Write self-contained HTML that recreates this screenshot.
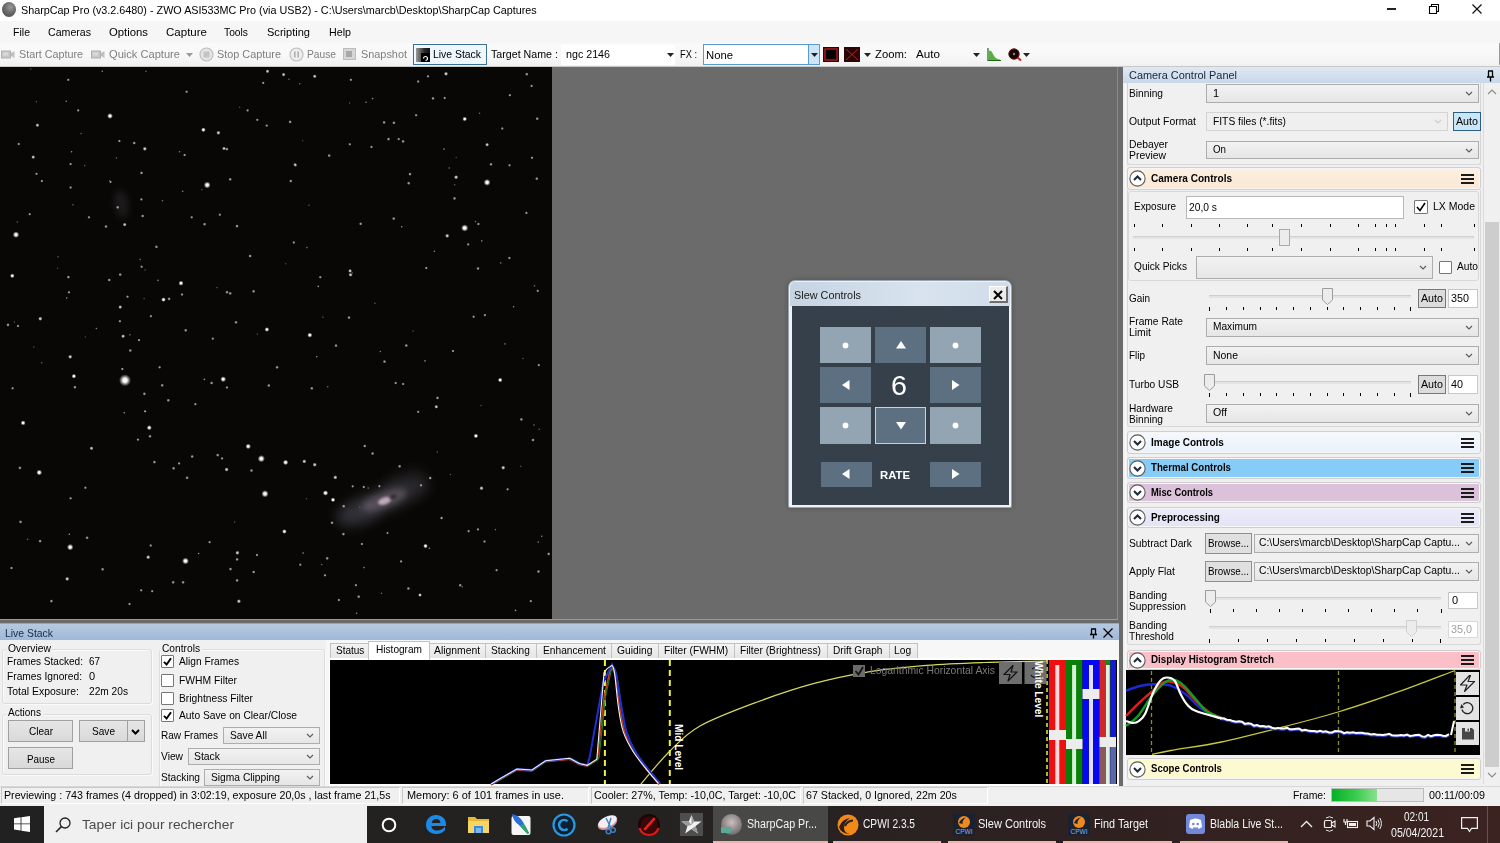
<!DOCTYPE html><html><head><meta charset="utf-8"><style>
*{margin:0;padding:0;box-sizing:border-box}
html,body{width:1500px;height:843px;overflow:hidden;background:#fff;font-family:"Liberation Sans",sans-serif}
.t{position:absolute;white-space:nowrap;line-height:1;transform-origin:0 0}
.r{position:absolute}
svg{position:absolute;overflow:visible}
</style></head><body>
<div class="r" style="left:0px;top:0px;width:1500px;height:21px;background:#ffffff;"></div>
<div class="r" style="left:2px;top:2px;width:14px;height:15px;border-radius:50%;background:radial-gradient(circle at 60% 35%,#9a9a9a 0,#6a6a6a 45%,#3b4a44 100%)"></div>
<div class="t" style="left:21px;top:5px;font-size:11px;color:#000;transform:scaleX(0.981) translateZ(0);">SharpCap Pro (v3.2.6480) - ZWO ASI533MC Pro (via USB2) - C:\Users\marcb\Desktop\SharpCap Captures</div>
<div class="r" style="left:1387px;top:8px;width:9px;height:2px;background:#222;"></div>
<svg style="left:1428px;top:3px" width="12" height="11"><path d="M1.5 3.5H8.5V10.5H1.5ZM3.5 3.5V1.5H10.5V8.5H8.5" stroke="#000" stroke-width="1.1" fill="none"/></svg>
<svg style="left:1472px;top:4px" width="10" height="10"><path d="M0.5 0.5L9.5 9.5M9.5 0.5L0.5 9.5" stroke="#111" stroke-width="1.2"/></svg>
<div class="r" style="left:0px;top:21px;width:1500px;height:22px;background:#f6f6f6;"></div>
<div class="t" style="left:13px;top:27px;font-size:11px;color:#000;transform:scaleX(0.959) translateZ(0);">File</div>
<div class="t" style="left:48px;top:27px;font-size:11px;color:#000;transform:scaleX(0.964) translateZ(0);">Cameras</div>
<div class="t" style="left:109px;top:27px;font-size:11px;color:#000;transform:scaleX(1.028) translateZ(0);">Options</div>
<div class="t" style="left:166px;top:27px;font-size:11px;color:#000;transform:scaleX(1.047) translateZ(0);">Capture</div>
<div class="t" style="left:224px;top:27px;font-size:11px;color:#000;transform:scaleX(0.934) translateZ(0);">Tools</div>
<div class="t" style="left:267px;top:27px;font-size:11px;color:#000;transform:scaleX(1.004) translateZ(0);">Scripting</div>
<div class="t" style="left:329px;top:27px;font-size:11px;color:#000;transform:scaleX(0.972) translateZ(0);">Help</div>
<div class="r" style="left:0px;top:43px;width:1500px;height:24px;background:linear-gradient(#fafafa,#f8f8f8 50%,#f0f0f0);"></div>
<div class="t" style="left:19px;top:49px;font-size:11px;color:#7e7e7e;transform:scaleX(0.978) translateZ(0);">Start Capture</div>
<div class="t" style="left:109px;top:49px;font-size:11px;color:#7e7e7e;transform:scaleX(1.009) translateZ(0);">Quick Capture</div>
<div class="t" style="left:217px;top:49px;font-size:11px;color:#7e7e7e;transform:scaleX(0.987) translateZ(0);">Stop Capture</div>
<div class="t" style="left:307px;top:49px;font-size:11px;color:#7e7e7e;transform:scaleX(0.929) translateZ(0);">Pause</div>
<div class="t" style="left:361px;top:49px;font-size:11px;color:#7e7e7e;transform:scaleX(0.989) translateZ(0);">Snapshot</div>
<svg style="left:1px;top:50px" width="14" height="9"><rect x="0.5" y="1" width="9" height="7" fill="#c8c8c8" stroke="#b0b0b0"/><path d="M10 3L13.5 1V8L10 6Z" fill="#c0c0c0"/><rect x="2" y="2.5" width="5" height="3" fill="#dadada"/></svg>
<svg style="left:91px;top:50px" width="14" height="9"><rect x="0.5" y="1" width="9" height="7" fill="#c8c8c8" stroke="#b0b0b0"/><path d="M10 3L13.5 1V8L10 6Z" fill="#c0c0c0"/><rect x="2" y="2.5" width="5" height="3" fill="#dadada"/></svg>
<svg style="left:186px;top:53px" width="7" height="4"><path d="M0 0H7L3.5 4Z" fill="#9a9a9a"/></svg>
<svg style="left:199px;top:47px" width="15" height="15"><circle cx="7.5" cy="7.5" r="6.5" fill="#e6e6e6" stroke="#bdbdbd" stroke-width="1.2"/><rect x="4.5" y="4.5" width="6" height="6" fill="#c4c4c4"/></svg>
<svg style="left:289px;top:47px" width="15" height="15"><circle cx="7.5" cy="7.5" r="6.5" fill="#eeeeee" stroke="#bdbdbd" stroke-width="1.2"/><rect x="5" y="4.5" width="1.6" height="6" fill="#b0b0b0"/><rect x="8.4" y="4.5" width="1.6" height="6" fill="#b0b0b0"/></svg>
<svg style="left:343px;top:48px" width="14" height="13"><rect x="0.5" y="0.5" width="12" height="11" fill="#d6d6d6" stroke="#bcbcbc"/><rect x="3" y="3" width="6" height="6" fill="#a8a8a8"/></svg>
<div class="r" style="left:413px;top:44px;width:74px;height:21px;border:1px solid #3f6f90;background:#eef7fb"></div>
<div class="r" style="left:416px;top:48px;width:14px;height:14px;background:linear-gradient(90deg,#9a9a9a,#2a2a2a 60%,#111)"></div>
<div class="r" style="left:421px;top:53px;width:9px;height:9px;background:#000"></div>
<svg style="left:422px;top:55px" width="7" height="7"><path d="M1.5 3.5A2 2 0 1 1 3.5 5.5" stroke="#fff" stroke-width="1.2" fill="none"/></svg>
<div class="t" style="left:433px;top:49px;font-size:11px;color:#000;transform:scaleX(0.945) translateZ(0);">Live Stack</div>
<div class="t" style="left:491px;top:49px;font-size:11px;color:#000;transform:scaleX(0.969) translateZ(0);">Target Name :</div>
<div class="r" style="left:561px;top:45px;width:114px;height:20px;background:#ffffff;"></div>
<div class="t" style="left:566px;top:49px;font-size:11px;color:#000;transform:scaleX(0.971) translateZ(0);">ngc 2146</div>
<svg style="left:667px;top:53px" width="7" height="4"><path d="M0 0H7L3.5 4Z" fill="#222"/></svg>
<div class="t" style="left:680px;top:49px;font-size:11px;color:#000;transform:scaleX(0.842) translateZ(0);">FX :</div>
<div class="r" style="left:703px;top:44px;width:117px;height:21px;border:1px solid #5a9ad0;background:#fff"></div>
<div class="r" style="left:809px;top:45px;width:10px;height:19px;background:#cde6f7;"></div>
<div class="r" style="left:808px;top:45px;width:1px;height:19px;background:#5a9ad0;"></div>
<svg style="left:811px;top:53px" width="7" height="4"><path d="M0 0H7L3.5 4Z" fill="#222"/></svg>
<div class="t" style="left:706px;top:50px;font-size:11px;color:#000;transform:scaleX(1.026) translateZ(0);">None</div>
<svg style="left:823px;top:47px" width="16" height="15"><rect x="0" y="0" width="16" height="15" fill="#2a0606"/><rect x="2" y="2" width="12" height="11" fill="#100" stroke="#c62020" stroke-width="1.2"/><circle cx="8" cy="7.5" r="4" fill="#000"/></svg>
<svg style="left:844px;top:47px" width="16" height="15"><rect x="0" y="0" width="16" height="15" fill="#2a0606"/><path d="M2 2L14 13M14 2L2 13" stroke="#b82020" stroke-width="1"/></svg>
<svg style="left:864px;top:53px" width="7" height="4"><path d="M0 0H7L3.5 4Z" fill="#222"/></svg>
<div class="t" style="left:875px;top:49px;font-size:11px;color:#000;transform:scaleX(1.026) translateZ(0);">Zoom:</div>
<div class="t" style="left:916px;top:49px;font-size:11px;color:#000;transform:scaleX(1.059) translateZ(0);">Auto</div>
<svg style="left:973px;top:53px" width="7" height="4"><path d="M0 0H7L3.5 4Z" fill="#222"/></svg>
<svg style="left:987px;top:48px" width="14" height="13"><path d="M2 12V3Q4 1 6 6T13 11.5V12Z" fill="#5ab040"/><path d="M1 0V12.5H14" stroke="#1a6a10" stroke-width="1.2" fill="none"/></svg>
<svg style="left:1008px;top:48px" width="14" height="13"><circle cx="6" cy="6" r="5.2" fill="#1a0505" stroke="#6a1010" stroke-width="1"/><path d="M9.5 9.5L13 12.5" stroke="#c02020" stroke-width="2"/><circle cx="6" cy="6" r="1.2" fill="#888"/></svg>
<svg style="left:1023px;top:53px" width="7" height="4"><path d="M0 0H7L3.5 4Z" fill="#222"/></svg>
<div class="r" style="left:1499px;top:43px;width:1px;height:22px;background:#9a9a9a;"></div>
<div class="r" style="left:0px;top:66px;width:1500px;height:1px;background:#c8c8c8;"></div>
<div class="r" style="left:0px;top:67px;width:552px;height:552px;background:#090705;"></div>
<div class="r" style="left:552px;top:67px;width:567px;height:552px;background:#6b6b6b;"></div>
<div class="r" style="left:1117px;top:67px;width:1px;height:552px;background:#8a8a8a;"></div>
<div class="r" style="left:0px;top:619px;width:1119px;height:5px;background:#6b6b6b;"></div>
<div class="r" style="left:0px;top:619px;width:1119px;height:1px;background:#9a9a9a;"></div>
<div class="r" style="left:1118px;top:67px;width:5px;height:719px;background:#6b6b6b;"></div>
<div class="r" style="left:1123px;top:67px;width:377px;height:719px;background:#f0f0f0;"></div>
<div class="r" style="left:1123px;top:67px;width:377px;height:16px;background:linear-gradient(#dfe9f5,#c8d8e9)"></div>
<div class="t" style="left:1129px;top:70px;font-size:11px;color:#1a2533;transform:scaleX(0.992) translateZ(0);">Camera Control Panel</div>
<svg style="left:1486px;top:70px" width="9" height="12"><path d="M2 1H7M2.5 1V7H6.5V1M1 7H8M4.5 7V11.5" stroke="#000" stroke-width="1.3" fill="none"/></svg>
<div class="r" style="left:1125px;top:83px;width:1px;height:703px;background:#fbfbfb;"></div>
<div class="r" style="left:1483px;top:83px;width:1px;height:701px;background:#dcdcdc;"></div>
<div class="r" style="left:1484px;top:83px;width:16px;height:701px;background:#f0f0f0;"></div>
<div class="r" style="left:1485px;top:222px;width:14px;height:545px;background:#cdcdcd;"></div>
<svg style="left:1487px;top:89px" width="10" height="6"><path d="M1 5L5 1L9 5" stroke="#8a8a8a" stroke-width="1.1" fill="none"/></svg>
<svg style="left:1487px;top:772px" width="10" height="6"><path d="M1 1L5 5L9 1" stroke="#8a8a8a" stroke-width="1.1" fill="none"/></svg>
<div class="r" style="left:1127px;top:83px;width:354px;height:82px;border:1px solid #d5d5d5;border-top:none;border-radius:0 0 3px 3px"></div>
<div class="t" style="left:1129px;top:88px;font-size:11px;color:#000;transform:scaleX(0.926) translateZ(0);">Binning</div>
<div class="r" style="left:1206px;top:84px;width:273px;height:19px;border:1px solid #adadad;background:linear-gradient(#f2f2f2,#e6e6e6)"></div>
<svg style="left:1465px;top:91px" width="8" height="5"><path d="M1 1L4 4L7 1" stroke="#5a5a5a" stroke-width="1.1" fill="none"/></svg>
<div class="t" style="left:1213px;top:88px;font-size:11px;color:#000;transform:scaleX(1.000) translateZ(0);">1</div>
<div class="t" style="left:1129px;top:116px;font-size:11px;color:#000;transform:scaleX(0.944) translateZ(0);">Output Format</div>
<div class="r" style="left:1206px;top:112px;width:242px;height:19px;border:1px solid #d4d4d4;background:#efefef"></div>
<svg style="left:1434px;top:119px" width="8" height="5"><path d="M1 1L4 4L7 1" stroke="#cdcdcd" stroke-width="1.1" fill="none"/></svg>
<div class="t" style="left:1213px;top:116px;font-size:11px;color:#000;transform:scaleX(0.933) translateZ(0);">FITS files (*.fits)</div>
<div class="r" style="left:1453px;top:112px;width:28px;height:19px;border:1px solid #2b5f86;background:#c9e6f6"></div>
<div class="t" style="left:1456px;top:116px;font-size:11px;color:#000;transform:scaleX(0.971) translateZ(0);">Auto</div>
<div class="t" style="left:1129px;top:139px;font-size:11px;color:#000;transform:scaleX(0.938) translateZ(0);">Debayer</div>
<div class="t" style="left:1129px;top:150px;font-size:11px;color:#000;transform:scaleX(0.946) translateZ(0);">Preview</div>
<div class="r" style="left:1206px;top:141px;width:273px;height:18px;border:1px solid #adadad;background:linear-gradient(#f2f2f2,#e6e6e6)"></div>
<svg style="left:1465px;top:148px" width="8" height="5"><path d="M1 1L4 4L7 1" stroke="#5a5a5a" stroke-width="1.1" fill="none"/></svg>
<div class="t" style="left:1213px;top:144px;font-size:11px;color:#000;transform:scaleX(0.885) translateZ(0);">On</div>
<div class="r" style="left:1127px;top:164px;width:354px;height:1px;background:#d8d8d8;"></div>
<div class="r" style="left:1127px;top:167px;width:354px;height:23px;border:1px solid #cfcfcf;border-radius:3px;background:linear-gradient(#fdf0e2,#fbe7d3);box-shadow:inset 0 0 0 1px #f6f6f6"></div>
<svg style="left:1129px;top:170.0px" width="17" height="17"><circle cx="8.5" cy="8.5" r="7.6" fill="#fff" stroke="#5a5a5a" stroke-width="1.1"/><path d="M5 10L8.5 6.5L12 10" stroke="#1c2a3a" stroke-width="2" fill="none"/></svg>
<div class="t" style="left:1151px;top:173px;font-size:11px;color:#000;font-weight:bold;transform:scaleX(0.914) translateZ(0);">Camera Controls</div>
<svg style="left:1461px;top:173.5px" width="13" height="10"><path d="M0 1H13M0 5H13M0 9H13" stroke="#1a1a1a" stroke-width="1.8"/></svg>
<div class="r" style="left:1128px;top:191px;width:351px;height:90px;border:1px solid #d8d8d8;border-radius:3px"></div>
<div class="t" style="left:1134px;top:201px;font-size:11px;color:#000;transform:scaleX(0.903) translateZ(0);">Exposure</div>
<div class="r" style="left:1186px;top:196px;width:218px;height:23px;border:1px solid #b8b8b8;background:#fff"></div>
<div class="t" style="left:1189px;top:202px;font-size:11px;color:#000;transform:scaleX(0.933) translateZ(0);">20,0 s</div>
<div class="r" style="left:1414px;top:200px;width:14px;height:14px;border:1px solid #777;border-radius:1px;background:#fff"></div>
<svg style="left:1416px;top:202px" width="10" height="10"><path d="M1 5L4 8.5L9 1" stroke="#000" stroke-width="1.6" fill="none"/></svg>
<div class="t" style="left:1433px;top:201px;font-size:11px;color:#000;transform:scaleX(0.953) translateZ(0);">LX Mode</div>
<div class="r" style="left:1134px;top:224px;width:1px;height:3px;background:#000;"></div>
<div class="r" style="left:1134px;top:248px;width:1px;height:3px;background:#000;"></div>
<div class="r" style="left:1162px;top:224px;width:1px;height:3px;background:#000;"></div>
<div class="r" style="left:1162px;top:248px;width:1px;height:3px;background:#000;"></div>
<div class="r" style="left:1191px;top:224px;width:1px;height:3px;background:#000;"></div>
<div class="r" style="left:1191px;top:248px;width:1px;height:3px;background:#000;"></div>
<div class="r" style="left:1219px;top:224px;width:1px;height:3px;background:#000;"></div>
<div class="r" style="left:1219px;top:248px;width:1px;height:3px;background:#000;"></div>
<div class="r" style="left:1247px;top:224px;width:1px;height:3px;background:#000;"></div>
<div class="r" style="left:1247px;top:248px;width:1px;height:3px;background:#000;"></div>
<div class="r" style="left:1272px;top:224px;width:1px;height:3px;background:#000;"></div>
<div class="r" style="left:1272px;top:248px;width:1px;height:3px;background:#000;"></div>
<div class="r" style="left:1301px;top:224px;width:1px;height:3px;background:#000;"></div>
<div class="r" style="left:1301px;top:248px;width:1px;height:3px;background:#000;"></div>
<div class="r" style="left:1330px;top:224px;width:1px;height:3px;background:#000;"></div>
<div class="r" style="left:1330px;top:248px;width:1px;height:3px;background:#000;"></div>
<div class="r" style="left:1358px;top:224px;width:1px;height:3px;background:#000;"></div>
<div class="r" style="left:1358px;top:248px;width:1px;height:3px;background:#000;"></div>
<div class="r" style="left:1375px;top:224px;width:1px;height:3px;background:#000;"></div>
<div class="r" style="left:1375px;top:248px;width:1px;height:3px;background:#000;"></div>
<div class="r" style="left:1386px;top:224px;width:1px;height:3px;background:#000;"></div>
<div class="r" style="left:1386px;top:248px;width:1px;height:3px;background:#000;"></div>
<div class="r" style="left:1395px;top:224px;width:1px;height:3px;background:#000;"></div>
<div class="r" style="left:1395px;top:248px;width:1px;height:3px;background:#000;"></div>
<div class="r" style="left:1424px;top:224px;width:1px;height:3px;background:#000;"></div>
<div class="r" style="left:1424px;top:248px;width:1px;height:3px;background:#000;"></div>
<div class="r" style="left:1441px;top:224px;width:1px;height:3px;background:#000;"></div>
<div class="r" style="left:1441px;top:248px;width:1px;height:3px;background:#000;"></div>
<div class="r" style="left:1474px;top:224px;width:1px;height:3px;background:#000;"></div>
<div class="r" style="left:1474px;top:248px;width:1px;height:3px;background:#000;"></div>
<div class="r" style="left:1133px;top:236px;width:341px;height:3px;background:#e3e3e3;"></div>
<div class="r" style="left:1133px;top:236px;width:341px;height:1px;background:#d0d0d0;"></div>
<div class="r" style="left:1279px;top:229px;width:11px;height:17px;border:1px solid #a9a9a9;background:#ececec"></div>
<div class="t" style="left:1134px;top:261px;font-size:11px;color:#000;transform:scaleX(0.922) translateZ(0);">Quick Picks</div>
<div class="r" style="left:1196px;top:256px;width:237px;height:23px;border:1px solid #adadad;background:linear-gradient(#f2f2f2,#e6e6e6)"></div>
<svg style="left:1419px;top:265px" width="8" height="5"><path d="M1 1L4 4L7 1" stroke="#5a5a5a" stroke-width="1.1" fill="none"/></svg>
<div class="r" style="left:1439px;top:261px;width:13px;height:13px;border:1px solid #777;border-radius:1px;background:#fff"></div>
<div class="t" style="left:1457px;top:261px;font-size:11px;color:#000;transform:scaleX(0.927) translateZ(0);">Auto</div>
<div class="t" style="left:1129px;top:293px;font-size:11px;color:#000;transform:scaleX(0.903) translateZ(0);">Gain</div>
<div class="r" style="left:1209px;top:295px;width:202px;height:3px;background:#e3e3e3;"></div>
<div class="r" style="left:1209px;top:295px;width:202px;height:1px;background:#cfcfcf;"></div>
<svg style="left:1322px;top:288px" width="11" height="17"><path d="M0.5 0.5H10.5V12L5.5 16.5L0.5 12Z" fill="#ececec" stroke="#9c9c9c"/></svg>
<div class="r" style="left:1209px;top:307px;width:1px;height:4px;background:#000;"></div>
<div class="r" style="left:1226px;top:307px;width:1px;height:3px;background:#000;"></div>
<div class="r" style="left:1243px;top:307px;width:1px;height:3px;background:#000;"></div>
<div class="r" style="left:1260px;top:307px;width:1px;height:3px;background:#000;"></div>
<div class="r" style="left:1276px;top:307px;width:1px;height:3px;background:#000;"></div>
<div class="r" style="left:1293px;top:307px;width:1px;height:3px;background:#000;"></div>
<div class="r" style="left:1310px;top:307px;width:1px;height:3px;background:#000;"></div>
<div class="r" style="left:1327px;top:307px;width:1px;height:3px;background:#000;"></div>
<div class="r" style="left:1343px;top:307px;width:1px;height:3px;background:#000;"></div>
<div class="r" style="left:1360px;top:307px;width:1px;height:3px;background:#000;"></div>
<div class="r" style="left:1377px;top:307px;width:1px;height:3px;background:#000;"></div>
<div class="r" style="left:1394px;top:307px;width:1px;height:3px;background:#000;"></div>
<div class="r" style="left:1410px;top:307px;width:1px;height:4px;background:#000;"></div>
<div class="r" style="left:1418px;top:289px;width:28px;height:19px;border:1px solid #777;background:#dcdcdc"></div>
<div class="t" style="left:1421.0px;top:293px;font-size:11px;color:#000;transform:scaleX(0.971) translateZ(0);">Auto</div>
<div class="r" style="left:1448px;top:289px;width:30px;height:19px;border:1px solid #c8c8c8;background:#fff"></div>
<div class="t" style="left:1451px;top:293px;font-size:11px;color:#000;transform:scaleX(0.980) translateZ(0);">350</div>
<div class="t" style="left:1129px;top:316px;font-size:11px;color:#000;transform:scaleX(0.930) translateZ(0);">Frame Rate</div>
<div class="t" style="left:1129px;top:327px;font-size:11px;color:#000;transform:scaleX(0.948) translateZ(0);">Limit</div>
<div class="r" style="left:1206px;top:318px;width:273px;height:19px;border:1px solid #adadad;background:linear-gradient(#f2f2f2,#e6e6e6)"></div>
<svg style="left:1465px;top:325px" width="8" height="5"><path d="M1 1L4 4L7 1" stroke="#5a5a5a" stroke-width="1.1" fill="none"/></svg>
<div class="t" style="left:1213px;top:321px;font-size:11px;color:#000;transform:scaleX(0.923) translateZ(0);">Maximum</div>
<div class="t" style="left:1129px;top:350px;font-size:11px;color:#000;transform:scaleX(0.903) translateZ(0);">Flip</div>
<div class="r" style="left:1206px;top:346px;width:273px;height:19px;border:1px solid #adadad;background:linear-gradient(#f2f2f2,#e6e6e6)"></div>
<svg style="left:1465px;top:353px" width="8" height="5"><path d="M1 1L4 4L7 1" stroke="#5a5a5a" stroke-width="1.1" fill="none"/></svg>
<div class="t" style="left:1213px;top:350px;font-size:11px;color:#000;transform:scaleX(0.950) translateZ(0);">None</div>
<div class="t" style="left:1129px;top:379px;font-size:11px;color:#000;transform:scaleX(0.925) translateZ(0);">Turbo USB</div>
<div class="r" style="left:1209px;top:381px;width:202px;height:3px;background:#e3e3e3;"></div>
<div class="r" style="left:1209px;top:381px;width:202px;height:1px;background:#cfcfcf;"></div>
<svg style="left:1204px;top:374px" width="11" height="17"><path d="M0.5 0.5H10.5V12L5.5 16.5L0.5 12Z" fill="#ececec" stroke="#9c9c9c"/></svg>
<div class="r" style="left:1209px;top:393px;width:1px;height:4px;background:#000;"></div>
<div class="r" style="left:1226px;top:393px;width:1px;height:3px;background:#000;"></div>
<div class="r" style="left:1243px;top:393px;width:1px;height:3px;background:#000;"></div>
<div class="r" style="left:1260px;top:393px;width:1px;height:3px;background:#000;"></div>
<div class="r" style="left:1276px;top:393px;width:1px;height:3px;background:#000;"></div>
<div class="r" style="left:1293px;top:393px;width:1px;height:3px;background:#000;"></div>
<div class="r" style="left:1310px;top:393px;width:1px;height:3px;background:#000;"></div>
<div class="r" style="left:1327px;top:393px;width:1px;height:3px;background:#000;"></div>
<div class="r" style="left:1343px;top:393px;width:1px;height:3px;background:#000;"></div>
<div class="r" style="left:1360px;top:393px;width:1px;height:3px;background:#000;"></div>
<div class="r" style="left:1377px;top:393px;width:1px;height:3px;background:#000;"></div>
<div class="r" style="left:1394px;top:393px;width:1px;height:3px;background:#000;"></div>
<div class="r" style="left:1410px;top:393px;width:1px;height:4px;background:#000;"></div>
<div class="r" style="left:1418px;top:375px;width:28px;height:19px;border:1px solid #777;background:#dcdcdc"></div>
<div class="t" style="left:1421.0px;top:379px;font-size:11px;color:#000;transform:scaleX(0.971) translateZ(0);">Auto</div>
<div class="r" style="left:1448px;top:375px;width:30px;height:19px;border:1px solid #c8c8c8;background:#fff"></div>
<div class="t" style="left:1451px;top:379px;font-size:11px;color:#000;transform:scaleX(0.980) translateZ(0);">40</div>
<div class="t" style="left:1129px;top:403px;font-size:11px;color:#000;transform:scaleX(0.923) translateZ(0);">Hardware</div>
<div class="t" style="left:1129px;top:414px;font-size:11px;color:#000;transform:scaleX(0.926) translateZ(0);">Binning</div>
<div class="r" style="left:1206px;top:404px;width:273px;height:19px;border:1px solid #adadad;background:linear-gradient(#f2f2f2,#e6e6e6)"></div>
<svg style="left:1465px;top:411px" width="8" height="5"><path d="M1 1L4 4L7 1" stroke="#5a5a5a" stroke-width="1.1" fill="none"/></svg>
<div class="t" style="left:1213px;top:407px;font-size:11px;color:#000;transform:scaleX(0.967) translateZ(0);">Off</div>
<div class="r" style="left:1127px;top:190px;width:354px;height:237px;border:1px solid #d8d8d8;border-top:none;border-radius:0 0 3px 3px"></div>
<div class="r" style="left:1127px;top:431px;width:354px;height:23px;border:1px solid #cfcfcf;border-radius:3px;background:linear-gradient(#f4f9fd,#e9f2fb);box-shadow:inset 0 0 0 1px #f6f6f6"></div>
<svg style="left:1129px;top:434.0px" width="17" height="17"><circle cx="8.5" cy="8.5" r="7.6" fill="#fff" stroke="#5a5a5a" stroke-width="1.1"/><path d="M5 7L8.5 10.5L12 7" stroke="#1c2a3a" stroke-width="2" fill="none"/></svg>
<div class="t" style="left:1151px;top:437px;font-size:11px;color:#000;font-weight:bold;transform:scaleX(0.911) translateZ(0);">Image Controls</div>
<svg style="left:1461px;top:437.5px" width="13" height="10"><path d="M0 1H13M0 5H13M0 9H13" stroke="#1a1a1a" stroke-width="1.8"/></svg>
<div class="r" style="left:1127px;top:457px;width:354px;height:22px;border:1px solid #cfcfcf;border-radius:3px;background:#86ccf7;box-shadow:inset 0 0 0 1px #f6f6f6"></div>
<svg style="left:1129px;top:459.5px" width="17" height="17"><circle cx="8.5" cy="8.5" r="7.6" fill="#fff" stroke="#5a5a5a" stroke-width="1.1"/><path d="M5 7L8.5 10.5L12 7" stroke="#1c2a3a" stroke-width="2" fill="none"/></svg>
<div class="t" style="left:1151px;top:462px;font-size:11px;color:#000;font-weight:bold;transform:scaleX(0.878) translateZ(0);">Thermal Controls</div>
<svg style="left:1461px;top:463.0px" width="13" height="10"><path d="M0 1H13M0 5H13M0 9H13" stroke="#1a1a1a" stroke-width="1.8"/></svg>
<div class="r" style="left:1127px;top:482px;width:354px;height:21px;border:1px solid #cfcfcf;border-radius:3px;background:#dcc1da;box-shadow:inset 0 0 0 1px #f6f6f6"></div>
<svg style="left:1129px;top:484.0px" width="17" height="17"><circle cx="8.5" cy="8.5" r="7.6" fill="#fff" stroke="#5a5a5a" stroke-width="1.1"/><path d="M5 7L8.5 10.5L12 7" stroke="#1c2a3a" stroke-width="2" fill="none"/></svg>
<div class="t" style="left:1151px;top:487px;font-size:11px;color:#000;font-weight:bold;transform:scaleX(0.852) translateZ(0);">Misc Controls</div>
<svg style="left:1461px;top:487.5px" width="13" height="10"><path d="M0 1H13M0 5H13M0 9H13" stroke="#1a1a1a" stroke-width="1.8"/></svg>
<div class="r" style="left:1127px;top:507px;width:354px;height:21px;border:1px solid #cfcfcf;border-radius:3px;background:linear-gradient(#ececf9,#e3e3f6);box-shadow:inset 0 0 0 1px #f6f6f6"></div>
<svg style="left:1129px;top:509.0px" width="17" height="17"><circle cx="8.5" cy="8.5" r="7.6" fill="#fff" stroke="#5a5a5a" stroke-width="1.1"/><path d="M5 10L8.5 6.5L12 10" stroke="#1c2a3a" stroke-width="2" fill="none"/></svg>
<div class="t" style="left:1151px;top:512px;font-size:11px;color:#000;font-weight:bold;transform:scaleX(0.902) translateZ(0);">Preprocessing</div>
<svg style="left:1461px;top:512.5px" width="13" height="10"><path d="M0 1H13M0 5H13M0 9H13" stroke="#1a1a1a" stroke-width="1.8"/></svg>
<div class="r" style="left:1127px;top:527px;width:354px;height:118px;border:1px solid #d8d8d8;border-top:none;border-radius:0 0 3px 3px"></div>
<div class="t" style="left:1129px;top:538px;font-size:11px;color:#000;transform:scaleX(0.936) translateZ(0);">Subtract Dark</div>
<div class="r" style="left:1205px;top:533px;width:47px;height:21px;border:1px solid #8f8f8f;background:#e0e0e0"></div>
<div class="t" style="left:1208.0px;top:538px;font-size:11px;color:#000;transform:scaleX(0.894) translateZ(0);">Browse...</div>
<div class="r" style="left:1254px;top:534px;width:225px;height:19px;border:1px solid #adadad;background:linear-gradient(#f2f2f2,#e6e6e6)"></div>
<svg style="left:1465px;top:541px" width="8" height="5"><path d="M1 1L4 4L7 1" stroke="#5a5a5a" stroke-width="1.1" fill="none"/></svg>
<div class="t" style="left:1259px;top:537px;font-size:11px;color:#000;transform:scaleX(0.939) translateZ(0);">C:\Users\marcb\Desktop\SharpCap Captu...</div>
<div class="t" style="left:1129px;top:566px;font-size:11px;color:#000;transform:scaleX(0.940) translateZ(0);">Apply Flat</div>
<div class="r" style="left:1205px;top:561px;width:47px;height:21px;border:1px solid #8f8f8f;background:#e0e0e0"></div>
<div class="t" style="left:1208.0px;top:566px;font-size:11px;color:#000;transform:scaleX(0.894) translateZ(0);">Browse...</div>
<div class="r" style="left:1254px;top:562px;width:225px;height:19px;border:1px solid #adadad;background:linear-gradient(#f2f2f2,#e6e6e6)"></div>
<svg style="left:1465px;top:569px" width="8" height="5"><path d="M1 1L4 4L7 1" stroke="#5a5a5a" stroke-width="1.1" fill="none"/></svg>
<div class="t" style="left:1259px;top:565px;font-size:11px;color:#000;transform:scaleX(0.939) translateZ(0);">C:\Users\marcb\Desktop\SharpCap Captu...</div>
<div class="t" style="left:1129px;top:590px;font-size:11px;color:#000;transform:scaleX(0.940) translateZ(0);">Banding</div>
<div class="t" style="left:1129px;top:601px;font-size:11px;color:#000;transform:scaleX(0.932) translateZ(0);">Suppression</div>
<div class="r" style="left:1209px;top:597px;width:232px;height:3px;background:#e3e3e3;"></div>
<div class="r" style="left:1209px;top:597px;width:232px;height:1px;background:#cfcfcf;"></div>
<svg style="left:1205px;top:590px" width="11" height="17"><path d="M0.5 0.5H10.5V12L5.5 16.5L0.5 12Z" fill="#ececec" stroke="#9c9c9c"/></svg>
<div class="r" style="left:1210px;top:609px;width:1px;height:4px;background:#000;"></div>
<div class="r" style="left:1233px;top:609px;width:1px;height:3px;background:#000;"></div>
<div class="r" style="left:1256px;top:609px;width:1px;height:3px;background:#000;"></div>
<div class="r" style="left:1279px;top:609px;width:1px;height:3px;background:#000;"></div>
<div class="r" style="left:1302px;top:609px;width:1px;height:3px;background:#000;"></div>
<div class="r" style="left:1325px;top:609px;width:1px;height:3px;background:#000;"></div>
<div class="r" style="left:1348px;top:609px;width:1px;height:3px;background:#000;"></div>
<div class="r" style="left:1371px;top:609px;width:1px;height:3px;background:#000;"></div>
<div class="r" style="left:1394px;top:609px;width:1px;height:3px;background:#000;"></div>
<div class="r" style="left:1417px;top:609px;width:1px;height:3px;background:#000;"></div>
<div class="r" style="left:1441px;top:609px;width:1px;height:4px;background:#000;"></div>
<div class="r" style="left:1448px;top:592px;width:30px;height:17px;border:1px solid #c8c8c8;background:#fff"></div>
<div class="t" style="left:1452px;top:595px;font-size:11px;color:#000;transform:scaleX(1.000) translateZ(0);">0</div>
<div class="t" style="left:1129px;top:620px;font-size:11px;color:#000;transform:scaleX(0.940) translateZ(0);">Banding</div>
<div class="t" style="left:1129px;top:631px;font-size:11px;color:#000;transform:scaleX(0.920) translateZ(0);">Threshold</div>
<div class="r" style="left:1209px;top:626px;width:232px;height:3px;background:#e3e3e3;"></div>
<div class="r" style="left:1209px;top:626px;width:232px;height:1px;background:#cfcfcf;"></div>
<svg style="left:1406px;top:620px" width="11" height="17"><path d="M0.5 0.5H10.5V12L5.5 16.5L0.5 12Z" fill="#ececec" stroke="#cfcfcf"/></svg>
<div class="r" style="left:1209px;top:639px;width:1px;height:4px;background:#000;"></div>
<div class="r" style="left:1238px;top:639px;width:1px;height:3px;background:#000;"></div>
<div class="r" style="left:1267px;top:639px;width:1px;height:3px;background:#000;"></div>
<div class="r" style="left:1296px;top:639px;width:1px;height:3px;background:#000;"></div>
<div class="r" style="left:1325px;top:639px;width:1px;height:3px;background:#000;"></div>
<div class="r" style="left:1354px;top:639px;width:1px;height:3px;background:#000;"></div>
<div class="r" style="left:1383px;top:639px;width:1px;height:3px;background:#000;"></div>
<div class="r" style="left:1412px;top:639px;width:1px;height:3px;background:#000;"></div>
<div class="r" style="left:1440px;top:639px;width:1px;height:4px;background:#000;"></div>
<div class="r" style="left:1448px;top:621px;width:30px;height:17px;border:1px solid #d8d8d8;background:#fff"></div>
<div class="t" style="left:1451px;top:624px;font-size:11px;color:#a0a0a0;transform:scaleX(0.980) translateZ(0);">35,0</div>
<div class="r" style="left:1127px;top:650px;width:354px;height:20px;border:1px solid #cfcfcf;border-radius:3px;background:#fbbfc8;box-shadow:inset 0 0 0 1px #f6f6f6"></div>
<svg style="left:1129px;top:651.5px" width="17" height="17"><circle cx="8.5" cy="8.5" r="7.6" fill="#fff" stroke="#5a5a5a" stroke-width="1.1"/><path d="M5 10L8.5 6.5L12 10" stroke="#1c2a3a" stroke-width="2" fill="none"/></svg>
<div class="t" style="left:1151px;top:654px;font-size:11px;color:#000;font-weight:bold;transform:scaleX(0.894) translateZ(0);">Display Histogram Stretch</div>
<svg style="left:1461px;top:655.0px" width="13" height="10"><path d="M0 1H13M0 5H13M0 9H13" stroke="#1a1a1a" stroke-width="1.8"/></svg>
<div class="r" style="left:1126px;top:670px;width:354px;height:85px;background:#000;"></div>
<div class="r" style="left:1127px;top:758px;width:354px;height:22px;border:1px solid #cfcfcf;border-radius:3px;background:#fdf9d0;box-shadow:inset 0 0 0 1px #f6f6f6"></div>
<svg style="left:1129px;top:760.5px" width="17" height="17"><circle cx="8.5" cy="8.5" r="7.6" fill="#fff" stroke="#5a5a5a" stroke-width="1.1"/><path d="M5 7L8.5 10.5L12 7" stroke="#1c2a3a" stroke-width="2" fill="none"/></svg>
<div class="t" style="left:1151px;top:763px;font-size:11px;color:#000;font-weight:bold;transform:scaleX(0.873) translateZ(0);">Scope Controls</div>
<svg style="left:1461px;top:764.0px" width="13" height="10"><path d="M0 1H13M0 5H13M0 9H13" stroke="#1a1a1a" stroke-width="1.8"/></svg>
<div class="r" style="left:1123px;top:784px;width:377px;height:2px;background:#f0f0f0;"></div>
<svg style="left:1126px;top:670px" width="354" height="85" viewBox="1126 670 354 85"><rect x="1126" y="670" width="354" height="85" fill="#000"/><path d="M1151.5 671V755M1338.5 671V755M1455 671V755" stroke="#8a8a30" stroke-width="1.3" stroke-dasharray="4 3"/><path d="M1152.0 754.5C1155.1 753.8 1159.2 752.6 1170.7 750.5C1182.2 748.4 1203.6 745.7 1221.3 742.0C1239.0 738.3 1257.5 733.5 1277.0 728.5C1296.5 723.5 1317.7 718.1 1338.0 712.0C1358.3 705.9 1379.2 698.6 1398.7 691.7C1418.2 684.8 1445.6 674.0 1455.0 670.5" stroke="#c8c83c" stroke-width="1.3" fill="none"/><path d="M1126.0 690.7C1128.3 689.9 1135.5 687.1 1140.0 686.0C1144.5 684.9 1147.9 684.4 1153.0 684.3C1158.1 684.2 1165.2 683.9 1170.7 685.6C1176.2 687.3 1180.9 690.7 1185.9 694.5C1191.0 698.3 1195.0 704.4 1201.0 708.4C1207.0 712.4 1218.5 716.8 1222.0 718.5" stroke="#1a2ad8" stroke-width="2.4" fill="none"/><path d="M1126.0 716.0C1128.3 713.7 1135.5 706.2 1140.0 702.0C1144.5 697.8 1148.7 694.1 1153.0 690.7C1157.3 687.3 1161.0 682.6 1165.6 681.8C1170.2 680.9 1175.7 682.4 1180.8 685.6C1185.9 688.8 1190.9 696.1 1196.0 700.8C1201.1 705.4 1206.4 710.5 1211.2 713.5C1216.0 716.5 1222.7 718.1 1225.0 719.0" stroke="#d82020" stroke-width="2.4" fill="none"/><path d="M1126.0 726.0C1128.0 724.3 1133.5 721.2 1138.0 716.0C1142.5 710.8 1148.0 700.4 1153.0 694.5C1158.0 688.6 1163.5 682.4 1168.1 680.5C1172.7 678.6 1176.1 679.8 1180.8 683.0C1185.5 686.2 1191.8 694.8 1196.0 699.5C1200.2 704.2 1201.7 707.8 1206.0 711.0C1210.3 714.2 1219.3 717.2 1222.0 718.5" stroke="#10a020" stroke-width="2.4" fill="none"/><path d="M1220 718.2L1224.0 718.5L1227.0 719.7L1230.0 720.0L1233.0 721.1L1236.0 721.7L1239.0 721.2L1242.0 721.7L1245.0 723.9L1248.0 723.3L1251.0 723.7L1254.0 725.7L1257.0 725.1L1260.0 726.3L1263.0 726.0L1266.0 726.8L1269.0 726.3L1272.0 727.7L1275.0 728.4L1278.0 727.9L1281.0 728.6L1284.0 728.6L1287.0 727.7L1290.0 729.3L1293.0 729.2L1296.0 728.8L1299.0 728.5L1302.0 730.4L1305.0 729.8L1308.0 730.5L1311.0 731.1L1314.0 731.0L1317.0 731.6L1320.0 730.8L1323.0 731.8L1326.0 731.3L1329.0 732.4L1332.0 732.4L1335.0 731.0L1338.0 731.2L1341.0 731.5L1344.0 733.2L1347.0 732.3L1350.0 732.8L1353.0 732.3L1356.0 732.9L1359.0 732.8L1362.0 732.8L1365.0 733.5L1368.0 733.6L1371.0 734.4L1374.0 734.1L1377.0 734.7L1380.0 734.7L1383.0 735.1L1386.0 734.6L1389.0 733.7L1392.0 735.2L1395.0 735.5L1398.0 735.5L1401.0 735.0L1404.0 735.4L1407.0 734.5L1410.0 735.9L1413.0 735.5L1416.0 735.0L1419.0 734.7L1422.0 736.4L1425.0 736.8L1428.0 734.9L1431.0 736.2L1434.0 735.3L1437.0 734.7L1440.0 734.9L1443.0 735.8L1446.0 735.9L1449.0 734.2" stroke="#3040c0" stroke-width="2.6" fill="none" transform="translate(0,0.8)"/><path d="M1126.0 721.0C1127.2 721.3 1130.8 723.0 1133.0 723.0C1135.2 723.0 1137.0 722.6 1139.0 721.0C1141.0 719.4 1143.0 718.2 1145.3 713.5C1147.6 708.8 1150.5 698.5 1153.0 693.0C1155.5 687.5 1158.2 683.1 1160.5 680.5C1162.8 677.9 1164.6 677.5 1166.9 677.5C1169.2 677.5 1172.2 677.7 1174.5 680.5C1176.8 683.3 1178.7 690.5 1180.8 694.5C1182.9 698.5 1184.6 701.9 1187.1 704.6C1189.6 707.4 1190.3 708.7 1196.0 711.0C1201.7 713.3 1217.1 717.2 1221.3 718.5" stroke="#ffffff" stroke-width="2.2" fill="none"/><path d="M1451 735L1454 721" stroke="#ffffff" stroke-width="2" fill="none"/><path d="M1220 718.2L1224.0 718.5L1227.0 719.7L1230.0 720.0L1233.0 721.1L1236.0 721.7L1239.0 721.2L1242.0 721.7L1245.0 723.9L1248.0 723.3L1251.0 723.7L1254.0 725.7L1257.0 725.1L1260.0 726.3L1263.0 726.0L1266.0 726.8L1269.0 726.3L1272.0 727.7L1275.0 728.4L1278.0 727.9L1281.0 728.6L1284.0 728.6L1287.0 727.7L1290.0 729.3L1293.0 729.2L1296.0 728.8L1299.0 728.5L1302.0 730.4L1305.0 729.8L1308.0 730.5L1311.0 731.1L1314.0 731.0L1317.0 731.6L1320.0 730.8L1323.0 731.8L1326.0 731.3L1329.0 732.4L1332.0 732.4L1335.0 731.0L1338.0 731.2L1341.0 731.5L1344.0 733.2L1347.0 732.3L1350.0 732.8L1353.0 732.3L1356.0 732.9L1359.0 732.8L1362.0 732.8L1365.0 733.5L1368.0 733.6L1371.0 734.4L1374.0 734.1L1377.0 734.7L1380.0 734.7L1383.0 735.1L1386.0 734.6L1389.0 733.7L1392.0 735.2L1395.0 735.5L1398.0 735.5L1401.0 735.0L1404.0 735.4L1407.0 734.5L1410.0 735.9L1413.0 735.5L1416.0 735.0L1419.0 734.7L1422.0 736.4L1425.0 736.8L1428.0 734.9L1431.0 736.2L1434.0 735.3L1437.0 734.7L1440.0 734.9L1443.0 735.8L1446.0 735.9L1449.0 734.2" stroke="#ffffff" stroke-width="2" fill="none"/></svg>
<div class="r" style="left:1456px;top:672px;width:23px;height:23px;background:#e3e3e3"></div>
<div class="r" style="left:1456px;top:697px;width:23px;height:23px;background:#e3e3e3"></div>
<div class="r" style="left:1456px;top:722px;width:23px;height:23px;background:#e3e3e3"></div>
<svg style="left:1458px;top:674px" width="19" height="19"><path d="M11.5 1.5L2.5 11H9L6.5 17.5L16.5 7.5H10L12.5 1.5Z" stroke="#222" stroke-width="1.2" fill="none" stroke-linejoin="round"/></svg>
<svg style="left:1459px;top:700px" width="17" height="17"><path d="M4.2 4.5A5.5 5.5 0 1 1 3 9.5" stroke="#222" stroke-width="1.3" fill="none"/><path d="M1 8.5L5 7.5L2.5 4Z" fill="#222"/></svg>
<svg style="left:1462px;top:728px" width="12" height="12"><path d="M0 0H10L12 2V11.5H0Z" fill="#474747"/><rect x="3" y="0" width="5" height="3.5" fill="#e3e3e3"/><rect x="5.5" y="0.6" width="1.5" height="2.2" fill="#474747"/></svg>
<svg style="left:0;top:67px" width="552" height="552" viewBox="0 67 552 552"><defs><radialGradient id="st"><stop offset="0" stop-color="#fff"/><stop offset="0.35" stop-color="#f4f4f4"/><stop offset="0.7" stop-color="#ddd" stop-opacity="0.45"/><stop offset="1" stop-color="#ccc" stop-opacity="0"/></radialGradient><radialGradient id="gx"><stop offset="0" stop-color="#c8a8b8"/><stop offset="0.35" stop-color="#6a5a66" stop-opacity="0.8"/><stop offset="1" stop-color="#302a30" stop-opacity="0"/></radialGradient><radialGradient id="gx2"><stop offset="0" stop-color="#8a8a8a" stop-opacity="0.7"/><stop offset="1" stop-color="#333" stop-opacity="0"/></radialGradient></defs><circle cx="179.5" cy="151.7" r="0.8" fill="#fff" fill-opacity="0.48"/><circle cx="41.7" cy="362.7" r="0.8" fill="#fff" fill-opacity="0.38"/><circle cx="33.8" cy="347.1" r="0.8" fill="#fff" fill-opacity="0.26"/><circle cx="239.6" cy="107.3" r="0.8" fill="#fff" fill-opacity="0.28"/><circle cx="234.6" cy="522.1" r="0.8" fill="#fff" fill-opacity="0.29"/><circle cx="124.3" cy="412.8" r="0.8" fill="#fff" fill-opacity="0.58"/><circle cx="318.3" cy="286.4" r="0.8" fill="#fff" fill-opacity="0.59"/><circle cx="27.5" cy="539.4" r="0.8" fill="#fff" fill-opacity="0.35"/><circle cx="81.1" cy="133.6" r="0.8" fill="#fff" fill-opacity="0.36"/><circle cx="449.2" cy="168.0" r="0.8" fill="#fff" fill-opacity="0.45"/><circle cx="352.1" cy="273.1" r="0.8" fill="#fff" fill-opacity="0.44"/><circle cx="36.4" cy="101.7" r="0.8" fill="#fff" fill-opacity="0.32"/><circle cx="374.9" cy="303.3" r="0.8" fill="#fff" fill-opacity="0.36"/><circle cx="322.9" cy="317.3" r="0.8" fill="#fff" fill-opacity="0.35"/><circle cx="437.3" cy="452.0" r="0.8" fill="#fff" fill-opacity="0.34"/><circle cx="316.8" cy="356.8" r="0.8" fill="#fff" fill-opacity="0.56"/><circle cx="401.7" cy="226.8" r="0.8" fill="#fff" fill-opacity="0.59"/><circle cx="66.7" cy="298.1" r="0.8" fill="#fff" fill-opacity="0.51"/><circle cx="85.3" cy="337.0" r="0.8" fill="#fff" fill-opacity="0.26"/><circle cx="368.2" cy="488.0" r="0.8" fill="#fff" fill-opacity="0.45"/><circle cx="481.8" cy="240.9" r="0.8" fill="#fff" fill-opacity="0.49"/><circle cx="327.7" cy="386.8" r="0.8" fill="#fff" fill-opacity="0.41"/><circle cx="462.3" cy="586.7" r="0.8" fill="#fff" fill-opacity="0.42"/><circle cx="366.0" cy="102.2" r="0.8" fill="#fff" fill-opacity="0.50"/><circle cx="356.6" cy="613.2" r="0.8" fill="#fff" fill-opacity="0.54"/><circle cx="158.0" cy="280.4" r="0.8" fill="#fff" fill-opacity="0.48"/><circle cx="14.4" cy="322.0" r="0.8" fill="#fff" fill-opacity="0.31"/><circle cx="66.2" cy="101.3" r="0.8" fill="#fff" fill-opacity="0.52"/><circle cx="72.9" cy="204.7" r="0.8" fill="#fff" fill-opacity="0.39"/><circle cx="479.5" cy="113.2" r="0.8" fill="#fff" fill-opacity="0.41"/><circle cx="303.1" cy="553.1" r="0.8" fill="#fff" fill-opacity="0.54"/><circle cx="475.5" cy="221.6" r="0.8" fill="#fff" fill-opacity="0.40"/><circle cx="198.6" cy="553.5" r="0.8" fill="#fff" fill-opacity="0.59"/><circle cx="84.7" cy="165.6" r="0.8" fill="#fff" fill-opacity="0.33"/><circle cx="129.9" cy="334.8" r="0.8" fill="#fff" fill-opacity="0.46"/><circle cx="146.0" cy="71.2" r="0.8" fill="#fff" fill-opacity="0.40"/><circle cx="204.4" cy="379.4" r="0.8" fill="#fff" fill-opacity="0.58"/><circle cx="380.4" cy="351.5" r="0.8" fill="#fff" fill-opacity="0.47"/><circle cx="372.6" cy="98.6" r="0.8" fill="#fff" fill-opacity="0.56"/><circle cx="429.4" cy="548.2" r="0.8" fill="#fff" fill-opacity="0.53"/><circle cx="217.0" cy="287.6" r="0.8" fill="#fff" fill-opacity="0.29"/><circle cx="349.6" cy="103.1" r="0.8" fill="#fff" fill-opacity="0.27"/><circle cx="116.4" cy="157.9" r="0.8" fill="#fff" fill-opacity="0.37"/><circle cx="30.8" cy="69.1" r="0.8" fill="#fff" fill-opacity="0.30"/><circle cx="57.6" cy="268.3" r="0.8" fill="#fff" fill-opacity="0.26"/><circle cx="481.1" cy="405.5" r="0.8" fill="#fff" fill-opacity="0.30"/><circle cx="140.2" cy="259.4" r="0.8" fill="#fff" fill-opacity="0.38"/><circle cx="69.3" cy="534.2" r="0.8" fill="#fff" fill-opacity="0.60"/><circle cx="257.4" cy="334.1" r="0.8" fill="#fff" fill-opacity="0.28"/><circle cx="58.0" cy="256.8" r="0.8" fill="#fff" fill-opacity="0.34"/><circle cx="456.2" cy="157.5" r="0.8" fill="#fff" fill-opacity="0.26"/><circle cx="523.1" cy="358.5" r="0.8" fill="#fff" fill-opacity="0.30"/><circle cx="299.7" cy="83.8" r="0.8" fill="#fff" fill-opacity="0.43"/><circle cx="538.2" cy="542.1" r="0.8" fill="#fff" fill-opacity="0.49"/><circle cx="145.1" cy="270.0" r="0.8" fill="#fff" fill-opacity="0.31"/><circle cx="425.0" cy="360.9" r="0.8" fill="#fff" fill-opacity="0.52"/><circle cx="182.7" cy="191.2" r="0.8" fill="#fff" fill-opacity="0.53"/><circle cx="541.7" cy="536.2" r="0.8" fill="#fff" fill-opacity="0.53"/><circle cx="450.4" cy="474.5" r="0.8" fill="#fff" fill-opacity="0.33"/><circle cx="285.7" cy="263.8" r="0.8" fill="#fff" fill-opacity="0.26"/><circle cx="17.3" cy="222.1" r="0.8" fill="#fff" fill-opacity="0.34"/><circle cx="381.5" cy="593.2" r="0.8" fill="#fff" fill-opacity="0.41"/><circle cx="515.5" cy="610.4" r="0.8" fill="#fff" fill-opacity="0.58"/><circle cx="201.8" cy="189.8" r="0.8" fill="#fff" fill-opacity="0.33"/><circle cx="109.8" cy="181.0" r="0.8" fill="#fff" fill-opacity="0.47"/><circle cx="495.4" cy="529.6" r="0.8" fill="#fff" fill-opacity="0.42"/><circle cx="359.8" cy="507.2" r="0.8" fill="#fff" fill-opacity="0.28"/><circle cx="364.0" cy="567.6" r="0.8" fill="#fff" fill-opacity="0.52"/><circle cx="413.1" cy="331.0" r="0.8" fill="#fff" fill-opacity="0.31"/><circle cx="434.4" cy="251.2" r="0.8" fill="#fff" fill-opacity="0.53"/><circle cx="534.5" cy="285.9" r="0.8" fill="#fff" fill-opacity="0.39"/><circle cx="520.8" cy="466.2" r="0.8" fill="#fff" fill-opacity="0.31"/><circle cx="71.6" cy="151.8" r="0.8" fill="#fff" fill-opacity="0.57"/><circle cx="444.0" cy="149.1" r="0.8" fill="#fff" fill-opacity="0.54"/><circle cx="539.2" cy="429.2" r="0.8" fill="#fff" fill-opacity="0.37"/><circle cx="302.7" cy="140.8" r="0.8" fill="#fff" fill-opacity="0.25"/><circle cx="534.0" cy="425.0" r="0.8" fill="#fff" fill-opacity="0.43"/><circle cx="513.6" cy="306.7" r="0.8" fill="#fff" fill-opacity="0.56"/><circle cx="454.7" cy="184.7" r="0.8" fill="#fff" fill-opacity="0.34"/><circle cx="162.5" cy="200.8" r="0.8" fill="#fff" fill-opacity="0.46"/><circle cx="144.1" cy="298.6" r="0.8" fill="#fff" fill-opacity="0.30"/><circle cx="500.7" cy="262.9" r="0.8" fill="#fff" fill-opacity="0.41"/><circle cx="321.7" cy="564.6" r="0.8" fill="#fff" fill-opacity="0.40"/><circle cx="504.9" cy="343.9" r="0.8" fill="#fff" fill-opacity="0.44"/><circle cx="288.9" cy="79.3" r="0.8" fill="#fff" fill-opacity="0.40"/><circle cx="102.3" cy="71.2" r="0.8" fill="#fff" fill-opacity="0.53"/><circle cx="96.4" cy="328.5" r="0.8" fill="#fff" fill-opacity="0.50"/><circle cx="306.9" cy="247.6" r="0.8" fill="#fff" fill-opacity="0.43"/><circle cx="306.4" cy="498.8" r="0.8" fill="#fff" fill-opacity="0.29"/><circle cx="309.0" cy="205.2" r="0.8" fill="#fff" fill-opacity="0.35"/><filter id="b6" x="-50%" y="-50%" width="200%" height="200%"><feGaussianBlur stdDeviation="6"/></filter><filter id="b3" x="-50%" y="-50%" width="200%" height="200%"><feGaussianBlur stdDeviation="3"/></filter><filter id="b1" x="-50%" y="-50%" width="200%" height="200%"><feGaussianBlur stdDeviation="1.2"/></filter><g transform="rotate(-20 384 499)"><ellipse cx="382" cy="500" rx="50" ry="13" fill="#6a6a7c" fill-opacity="0.3" filter="url(#b6)"/><ellipse cx="356" cy="506" rx="22" ry="11" fill="#5a6478" fill-opacity="0.25" filter="url(#b6)"/><ellipse cx="410" cy="489" rx="22" ry="9" fill="#5a6070" fill-opacity="0.2" filter="url(#b6)"/><ellipse cx="384" cy="500" rx="24" ry="8" fill="#9a8a9c" fill-opacity="0.38" filter="url(#b3)"/><ellipse cx="384" cy="501" rx="7" ry="3.5" fill="#e0c8d8" fill-opacity="0.75" filter="url(#b1)"/><ellipse cx="393" cy="500" rx="4" ry="1.5" fill="#201018" fill-opacity="0.7" filter="url(#b1)"/></g><ellipse cx="121.5" cy="204" rx="7" ry="14" transform="rotate(-10 121.5 204)" fill="#6a7080" fill-opacity="0.18" filter="url(#b3)"/><circle cx="110" cy="116" r="2.96" fill="url(#st)" fill-opacity="1.0"/><circle cx="203.4" cy="129.8" r="2.41" fill="url(#st)" fill-opacity="1.0"/><circle cx="218.4" cy="132.8" r="2.22" fill="url(#st)" fill-opacity="0.8"/><circle cx="144.8" cy="148.8" r="2.22" fill="url(#st)" fill-opacity="0.8"/><circle cx="224" cy="148.5" r="2.04" fill="url(#st)" fill-opacity="0.8"/><circle cx="119.4" cy="141" r="1.67" fill="url(#st)" fill-opacity="0.6"/><circle cx="207.2" cy="185" r="3.52" fill="url(#st)" fill-opacity="1.0"/><circle cx="446" cy="73.8" r="2.22" fill="url(#st)" fill-opacity="0.8"/><circle cx="464.7" cy="119" r="2.41" fill="url(#st)" fill-opacity="1.0"/><circle cx="487.1" cy="182.4" r="3.52" fill="url(#st)" fill-opacity="1.0"/><circle cx="456.1" cy="177.2" r="2.22" fill="url(#st)" fill-opacity="0.8"/><circle cx="464.7" cy="228" r="3.70" fill="url(#st)" fill-opacity="1.0"/><circle cx="447.2" cy="235.8" r="2.22" fill="url(#st)" fill-opacity="0.8"/><circle cx="408.7" cy="183.2" r="1.85" fill="url(#st)" fill-opacity="0.6"/><circle cx="403.1" cy="141.4" r="1.85" fill="url(#st)" fill-opacity="0.6"/><circle cx="398.7" cy="139.1" r="1.67" fill="url(#st)" fill-opacity="0.6"/><circle cx="487.1" cy="144.7" r="2.04" fill="url(#st)" fill-opacity="0.8"/><circle cx="16" cy="234.7" r="3.33" fill="url(#st)" fill-opacity="1.0"/><circle cx="12.3" cy="275.8" r="2.41" fill="url(#st)" fill-opacity="1.0"/><circle cx="181" cy="283.2" r="2.59" fill="url(#st)" fill-opacity="1.0"/><circle cx="163.5" cy="299.6" r="2.41" fill="url(#st)" fill-opacity="1.0"/><circle cx="169.1" cy="298.9" r="1.85" fill="url(#st)" fill-opacity="0.6"/><circle cx="350.1" cy="270.9" r="2.04" fill="url(#st)" fill-opacity="0.8"/><circle cx="350.1" cy="274.6" r="1.85" fill="url(#st)" fill-opacity="0.6"/><circle cx="266.9" cy="329.5" r="2.41" fill="url(#st)" fill-opacity="1.0"/><circle cx="309.8" cy="335.1" r="2.59" fill="url(#st)" fill-opacity="1.0"/><circle cx="227" cy="292.2" r="1.85" fill="url(#st)" fill-opacity="0.6"/><circle cx="250.1" cy="256" r="1.85" fill="url(#st)" fill-opacity="0.6"/><circle cx="204.6" cy="224.2" r="1.85" fill="url(#st)" fill-opacity="0.6"/><circle cx="237" cy="226.1" r="1.85" fill="url(#st)" fill-opacity="0.6"/><circle cx="40.3" cy="318.7" r="2.22" fill="url(#st)" fill-opacity="0.8"/><circle cx="120.2" cy="307.1" r="2.04" fill="url(#st)" fill-opacity="0.8"/><circle cx="120.2" cy="274.6" r="1.85" fill="url(#st)" fill-opacity="0.6"/><circle cx="433" cy="98.4" r="1.85" fill="url(#st)" fill-opacity="0.6"/><circle cx="532" cy="157.8" r="1.67" fill="url(#st)" fill-opacity="0.6"/><circle cx="536.8" cy="178.7" r="1.85" fill="url(#st)" fill-opacity="0.6"/><circle cx="509.5" cy="165.3" r="1.67" fill="url(#st)" fill-opacity="0.6"/><circle cx="350.9" cy="79.8" r="1.67" fill="url(#st)" fill-opacity="0.6"/><circle cx="320.3" cy="277.2" r="1.67" fill="url(#st)" fill-opacity="0.6"/><circle cx="349" cy="317.6" r="1.85" fill="url(#st)" fill-opacity="0.6"/><circle cx="294.9" cy="164.5" r="1.85" fill="url(#st)" fill-opacity="0.6"/><circle cx="18.7" cy="144" r="1.67" fill="url(#st)" fill-opacity="0.6"/><circle cx="68.3" cy="79.8" r="1.67" fill="url(#st)" fill-opacity="0.6"/><circle cx="186.6" cy="91.7" r="1.67" fill="url(#st)" fill-opacity="0.6"/><circle cx="125" cy="380.3" r="6.10" fill="url(#st)" fill-opacity="1.0"/><circle cx="223.2" cy="379.2" r="2.96" fill="url(#st)" fill-opacity="1.0"/><circle cx="73.9" cy="376.2" r="2.41" fill="url(#st)" fill-opacity="1.0"/><circle cx="70.2" cy="356.8" r="2.22" fill="url(#st)" fill-opacity="0.8"/><circle cx="23.1" cy="422.9" r="2.59" fill="url(#st)" fill-opacity="1.0"/><circle cx="149.3" cy="427.7" r="2.59" fill="url(#st)" fill-opacity="1.0"/><circle cx="150" cy="436.3" r="1.85" fill="url(#st)" fill-opacity="0.6"/><circle cx="91.5" cy="448.3" r="2.04" fill="url(#st)" fill-opacity="0.8"/><circle cx="39.2" cy="472.5" r="2.96" fill="url(#st)" fill-opacity="1.0"/><circle cx="248.2" cy="446.4" r="2.78" fill="url(#st)" fill-opacity="1.0"/><circle cx="261.3" cy="458.7" r="3.70" fill="url(#st)" fill-opacity="1.0"/><circle cx="285.6" cy="462.4" r="2.78" fill="url(#st)" fill-opacity="1.0"/><circle cx="226.6" cy="469.5" r="2.22" fill="url(#st)" fill-opacity="0.8"/><circle cx="265" cy="493.8" r="3.70" fill="url(#st)" fill-opacity="1.0"/><circle cx="325.5" cy="493" r="2.78" fill="url(#st)" fill-opacity="1.0"/><circle cx="333" cy="499.8" r="2.41" fill="url(#st)" fill-opacity="1.0"/><circle cx="284.4" cy="531.5" r="2.41" fill="url(#st)" fill-opacity="1.0"/><circle cx="70.2" cy="547.2" r="3.33" fill="url(#st)" fill-opacity="1.0"/><circle cx="148.2" cy="557.2" r="2.22" fill="url(#st)" fill-opacity="0.8"/><circle cx="185.5" cy="561" r="3.52" fill="url(#st)" fill-opacity="1.0"/><circle cx="237.4" cy="552.8" r="2.22" fill="url(#st)" fill-opacity="0.8"/><circle cx="67.2" cy="578.9" r="2.22" fill="url(#st)" fill-opacity="0.8"/><circle cx="238.9" cy="601.3" r="2.22" fill="url(#st)" fill-opacity="0.8"/><circle cx="500.2" cy="380" r="2.41" fill="url(#st)" fill-opacity="1.0"/><circle cx="475.9" cy="435.9" r="2.41" fill="url(#st)" fill-opacity="1.0"/><circle cx="503.2" cy="467.7" r="2.22" fill="url(#st)" fill-opacity="0.8"/><circle cx="481.5" cy="488.2" r="2.22" fill="url(#st)" fill-opacity="0.8"/><circle cx="425.5" cy="546" r="2.41" fill="url(#st)" fill-opacity="1.0"/><circle cx="533" cy="440" r="1.85" fill="url(#st)" fill-opacity="0.6"/><circle cx="437.5" cy="397.9" r="1.85" fill="url(#st)" fill-opacity="0.6"/><circle cx="336" cy="345.6" r="1.85" fill="url(#st)" fill-opacity="0.6"/><circle cx="384.5" cy="361.6" r="1.85" fill="url(#st)" fill-opacity="0.6"/><circle cx="420" cy="595" r="2.04" fill="url(#st)" fill-opacity="0.8"/><circle cx="548.7" cy="553.9" r="1.85" fill="url(#st)" fill-opacity="0.6"/><circle cx="441.6" cy="518" r="1.85" fill="url(#st)" fill-opacity="0.6"/><circle cx="460.2" cy="585.2" r="1.85" fill="url(#st)" fill-opacity="0.6"/><circle cx="211.6" cy="383" r="1.85" fill="url(#st)" fill-opacity="0.6"/><circle cx="268.8" cy="385.5" r="1.85" fill="url(#st)" fill-opacity="0.6"/><circle cx="192.2" cy="456.5" r="1.85" fill="url(#st)" fill-opacity="0.6"/><circle cx="343.4" cy="534.1" r="1.85" fill="url(#st)" fill-opacity="0.6"/><circle cx="395.7" cy="383" r="1.67" fill="url(#st)" fill-opacity="0.6"/><circle cx="403.1" cy="384" r="1.67" fill="url(#st)" fill-opacity="0.6"/><circle cx="399.6" cy="466.3" r="1.85" fill="url(#st)" fill-opacity="0.6"/><circle cx="430.2" cy="478" r="1.85" fill="url(#st)" fill-opacity="0.6"/><circle cx="364.8" cy="446" r="1.85" fill="url(#st)" fill-opacity="0.6"/><circle cx="372.6" cy="453.5" r="1.85" fill="url(#st)" fill-opacity="0.6"/><circle cx="304.3" cy="461.4" r="2.22" fill="url(#st)" fill-opacity="0.8"/><circle cx="314.7" cy="464.7" r="2.22" fill="url(#st)" fill-opacity="0.8"/><circle cx="335.3" cy="477.4" r="2.22" fill="url(#st)" fill-opacity="0.8"/><circle cx="352.7" cy="486.3" r="1.67" fill="url(#st)" fill-opacity="0.6"/><circle cx="363.8" cy="487" r="1.67" fill="url(#st)" fill-opacity="0.6"/><circle cx="379.4" cy="486.2" r="1.67" fill="url(#st)" fill-opacity="0.6"/><circle cx="421" cy="485.3" r="1.67" fill="url(#st)" fill-opacity="0.6"/><circle cx="332" cy="522.8" r="1.85" fill="url(#st)" fill-opacity="0.6"/><circle cx="361.9" cy="544" r="1.67" fill="url(#st)" fill-opacity="0.6"/><circle cx="387.5" cy="533" r="1.48" fill="url(#st)" fill-opacity="0.6"/><circle cx="117.7" cy="207.3" r="1.85" fill="url(#st)" fill-opacity="0.6"/><circle cx="141.4" cy="199.4" r="1.67" fill="url(#st)" fill-opacity="0.6"/><circle cx="142.7" cy="216" r="1.85" fill="url(#st)" fill-opacity="0.6"/><circle cx="124.7" cy="224.6" r="2.04" fill="url(#st)" fill-opacity="0.8"/><circle cx="106" cy="226.5" r="1.85" fill="url(#st)" fill-opacity="0.6"/><circle cx="141.5" cy="172.9" r="1.85" fill="url(#st)" fill-opacity="0.6"/><circle cx="110.6" cy="182" r="1.48" fill="url(#st)" fill-opacity="0.6"/><circle cx="267.5" cy="71.3" r="2.04" fill="url(#st)" fill-opacity="0.8"/><circle cx="263.2" cy="82.9" r="1.67" fill="url(#st)" fill-opacity="0.6"/><circle cx="247.6" cy="110.4" r="1.67" fill="url(#st)" fill-opacity="0.6"/><circle cx="257.3" cy="119.8" r="1.67" fill="url(#st)" fill-opacity="0.6"/><circle cx="266.7" cy="125.6" r="1.67" fill="url(#st)" fill-opacity="0.6"/><circle cx="37.4" cy="125.2" r="2.04" fill="url(#st)" fill-opacity="0.8"/><circle cx="33.2" cy="157.1" r="2.04" fill="url(#st)" fill-opacity="0.8"/><circle cx="134.2" cy="143" r="1.85" fill="url(#st)" fill-opacity="0.6"/><circle cx="226.9" cy="149.1" r="1.85" fill="url(#st)" fill-opacity="0.6"/><circle cx="184.6" cy="155" r="1.67" fill="url(#st)" fill-opacity="0.6"/><circle cx="230.2" cy="179.3" r="1.85" fill="url(#st)" fill-opacity="0.6"/><circle cx="70.6" cy="164.1" r="1.67" fill="url(#st)" fill-opacity="0.6"/><circle cx="36.5" cy="173.8" r="1.67" fill="url(#st)" fill-opacity="0.6"/><circle cx="41.9" cy="181" r="1.67" fill="url(#st)" fill-opacity="0.6"/><circle cx="70.6" cy="187.5" r="1.67" fill="url(#st)" fill-opacity="0.6"/><circle cx="89" cy="217.3" r="1.67" fill="url(#st)" fill-opacity="0.6"/><circle cx="191.7" cy="217.3" r="1.67" fill="url(#st)" fill-opacity="0.6"/><circle cx="219.8" cy="214.7" r="1.67" fill="url(#st)" fill-opacity="0.6"/><circle cx="156.4" cy="246.8" r="1.85" fill="url(#st)" fill-opacity="0.6"/><circle cx="29.7" cy="214.2" r="1.67" fill="url(#st)" fill-opacity="0.6"/><circle cx="78.2" cy="110.4" r="1.67" fill="url(#st)" fill-opacity="0.6"/><circle cx="283.6" cy="74.6" r="2.04" fill="url(#st)" fill-opacity="0.8"/><circle cx="314.7" cy="76.3" r="2.04" fill="url(#st)" fill-opacity="0.8"/><circle cx="428" cy="76.3" r="1.67" fill="url(#st)" fill-opacity="0.6"/><circle cx="418.2" cy="81.5" r="1.67" fill="url(#st)" fill-opacity="0.6"/><circle cx="526.8" cy="74.2" r="1.85" fill="url(#st)" fill-opacity="0.6"/><circle cx="531.6" cy="85.9" r="1.67" fill="url(#st)" fill-opacity="0.6"/><circle cx="444.7" cy="98" r="1.67" fill="url(#st)" fill-opacity="0.6"/><circle cx="509.9" cy="95.2" r="1.67" fill="url(#st)" fill-opacity="0.6"/><circle cx="537.2" cy="118.7" r="1.85" fill="url(#st)" fill-opacity="0.6"/><circle cx="290.1" cy="121.9" r="1.85" fill="url(#st)" fill-opacity="0.6"/><circle cx="384.1" cy="122.4" r="1.85" fill="url(#st)" fill-opacity="0.6"/><circle cx="393.9" cy="122.8" r="1.85" fill="url(#st)" fill-opacity="0.6"/><circle cx="416.1" cy="115.2" r="1.67" fill="url(#st)" fill-opacity="0.6"/><circle cx="502.3" cy="128.5" r="1.67" fill="url(#st)" fill-opacity="0.6"/><circle cx="388.5" cy="139.1" r="1.85" fill="url(#st)" fill-opacity="0.6"/><circle cx="371.5" cy="146.9" r="1.67" fill="url(#st)" fill-opacity="0.6"/><circle cx="349.8" cy="144.3" r="1.67" fill="url(#st)" fill-opacity="0.6"/><circle cx="329.2" cy="155.6" r="1.85" fill="url(#st)" fill-opacity="0.6"/><circle cx="491" cy="164.3" r="1.85" fill="url(#st)" fill-opacity="0.6"/><circle cx="295.5" cy="165.2" r="1.85" fill="url(#st)" fill-opacity="0.6"/><circle cx="290.8" cy="181" r="1.85" fill="url(#st)" fill-opacity="0.6"/><circle cx="410" cy="174.1" r="1.85" fill="url(#st)" fill-opacity="0.6"/><circle cx="454.5" cy="198.4" r="1.85" fill="url(#st)" fill-opacity="0.6"/><circle cx="526.4" cy="212.9" r="1.67" fill="url(#st)" fill-opacity="0.6"/><circle cx="393.7" cy="218.6" r="1.85" fill="url(#st)" fill-opacity="0.6"/><circle cx="360.7" cy="223.8" r="1.85" fill="url(#st)" fill-opacity="0.6"/><circle cx="478.4" cy="224" r="1.67" fill="url(#st)" fill-opacity="0.6"/><circle cx="468.2" cy="244.4" r="1.67" fill="url(#st)" fill-opacity="0.6"/><circle cx="293.8" cy="242.5" r="1.67" fill="url(#st)" fill-opacity="0.6"/><circle cx="68.4" cy="277.1" r="1.85" fill="url(#st)" fill-opacity="0.6"/><circle cx="109.2" cy="280" r="1.85" fill="url(#st)" fill-opacity="0.6"/><circle cx="141.6" cy="266.7" r="1.67" fill="url(#st)" fill-opacity="0.6"/><circle cx="182" cy="294.5" r="1.67" fill="url(#st)" fill-opacity="0.6"/><circle cx="230.2" cy="293.4" r="1.85" fill="url(#st)" fill-opacity="0.6"/><circle cx="253.6" cy="291.3" r="1.85" fill="url(#st)" fill-opacity="0.6"/><circle cx="8" cy="324.9" r="1.85" fill="url(#st)" fill-opacity="0.6"/><circle cx="18" cy="326" r="1.67" fill="url(#st)" fill-opacity="0.6"/><circle cx="69" cy="292.3" r="1.67" fill="url(#st)" fill-opacity="0.6"/><circle cx="119.9" cy="321.2" r="1.67" fill="url(#st)" fill-opacity="0.6"/><circle cx="127.5" cy="296.7" r="1.67" fill="url(#st)" fill-opacity="0.6"/><circle cx="150.9" cy="316.2" r="1.67" fill="url(#st)" fill-opacity="0.6"/><circle cx="185.7" cy="330.3" r="1.85" fill="url(#st)" fill-opacity="0.6"/><circle cx="236" cy="322.3" r="1.85" fill="url(#st)" fill-opacity="0.6"/><circle cx="123.1" cy="336.2" r="2.04" fill="url(#st)" fill-opacity="0.8"/><circle cx="139" cy="340.1" r="1.67" fill="url(#st)" fill-opacity="0.6"/><circle cx="130.3" cy="350.5" r="1.85" fill="url(#st)" fill-opacity="0.6"/><circle cx="212.8" cy="338.6" r="1.67" fill="url(#st)" fill-opacity="0.6"/><circle cx="122.3" cy="369" r="1.67" fill="url(#st)" fill-opacity="0.6"/><circle cx="159.6" cy="367.3" r="1.67" fill="url(#st)" fill-opacity="0.6"/><circle cx="74.9" cy="387.2" r="1.85" fill="url(#st)" fill-opacity="0.6"/><circle cx="162.2" cy="385.3" r="1.85" fill="url(#st)" fill-opacity="0.6"/><circle cx="226.9" cy="387.5" r="1.67" fill="url(#st)" fill-opacity="0.6"/><circle cx="144.4" cy="393.8" r="1.85" fill="url(#st)" fill-opacity="0.6"/><circle cx="168.3" cy="400.3" r="1.85" fill="url(#st)" fill-opacity="0.6"/><circle cx="195.4" cy="404.2" r="1.67" fill="url(#st)" fill-opacity="0.6"/><circle cx="145.1" cy="411.3" r="1.67" fill="url(#st)" fill-opacity="0.6"/><circle cx="12.6" cy="388.3" r="1.67" fill="url(#st)" fill-opacity="0.6"/><circle cx="350.9" cy="275" r="1.85" fill="url(#st)" fill-opacity="0.6"/><circle cx="426.3" cy="268" r="1.67" fill="url(#st)" fill-opacity="0.6"/><circle cx="478" cy="268.5" r="1.85" fill="url(#st)" fill-opacity="0.6"/><circle cx="509.4" cy="258" r="1.67" fill="url(#st)" fill-opacity="0.6"/><circle cx="406.3" cy="345.5" r="1.85" fill="url(#st)" fill-opacity="0.6"/><circle cx="436.3" cy="406.8" r="2.04" fill="url(#st)" fill-opacity="0.8"/><circle cx="418.2" cy="411.8" r="1.67" fill="url(#st)" fill-opacity="0.6"/><circle cx="311.8" cy="388.3" r="1.85" fill="url(#st)" fill-opacity="0.6"/><circle cx="473.6" cy="316.7" r="1.67" fill="url(#st)" fill-opacity="0.6"/><circle cx="484.9" cy="315.1" r="1.67" fill="url(#st)" fill-opacity="0.6"/><circle cx="538.8" cy="365.1" r="1.67" fill="url(#st)" fill-opacity="0.6"/><circle cx="521.4" cy="419.4" r="1.85" fill="url(#st)" fill-opacity="0.6"/><circle cx="453" cy="351" r="1.67" fill="url(#st)" fill-opacity="0.6"/><circle cx="277.1" cy="367.3" r="1.85" fill="url(#st)" fill-opacity="0.6"/><circle cx="537.7" cy="290.8" r="1.67" fill="url(#st)" fill-opacity="0.6"/><circle cx="19.9" cy="467.9" r="1.85" fill="url(#st)" fill-opacity="0.6"/><circle cx="137.9" cy="439.6" r="1.67" fill="url(#st)" fill-opacity="0.6"/><circle cx="251.5" cy="470.5" r="1.85" fill="url(#st)" fill-opacity="0.6"/><circle cx="217.7" cy="455.1" r="1.85" fill="url(#st)" fill-opacity="0.6"/><circle cx="222.1" cy="458.4" r="1.67" fill="url(#st)" fill-opacity="0.6"/><circle cx="154.4" cy="462.1" r="1.85" fill="url(#st)" fill-opacity="0.6"/><circle cx="173.6" cy="468.3" r="1.85" fill="url(#st)" fill-opacity="0.6"/><circle cx="187.1" cy="477.8" r="1.85" fill="url(#st)" fill-opacity="0.6"/><circle cx="179.1" cy="463.4" r="1.67" fill="url(#st)" fill-opacity="0.6"/><circle cx="85.4" cy="487.7" r="1.67" fill="url(#st)" fill-opacity="0.6"/><circle cx="70.6" cy="498.3" r="1.67" fill="url(#st)" fill-opacity="0.6"/><circle cx="20.5" cy="521.9" r="1.85" fill="url(#st)" fill-opacity="0.6"/><circle cx="40.1" cy="541.1" r="1.85" fill="url(#st)" fill-opacity="0.6"/><circle cx="87.1" cy="537.8" r="1.85" fill="url(#st)" fill-opacity="0.6"/><circle cx="209.6" cy="542.2" r="1.67" fill="url(#st)" fill-opacity="0.6"/><circle cx="237.1" cy="559.4" r="1.85" fill="url(#st)" fill-opacity="0.6"/><circle cx="257" cy="555" r="1.67" fill="url(#st)" fill-opacity="0.6"/><circle cx="230.5" cy="569.1" r="1.85" fill="url(#st)" fill-opacity="0.6"/><circle cx="253.7" cy="572" r="1.85" fill="url(#st)" fill-opacity="0.6"/><circle cx="237.1" cy="580.4" r="1.85" fill="url(#st)" fill-opacity="0.6"/><circle cx="102.6" cy="569.3" r="1.85" fill="url(#st)" fill-opacity="0.6"/><circle cx="11.5" cy="568" r="1.67" fill="url(#st)" fill-opacity="0.6"/><circle cx="173.2" cy="582.3" r="1.85" fill="url(#st)" fill-opacity="0.6"/><circle cx="183.1" cy="582.3" r="1.85" fill="url(#st)" fill-opacity="0.6"/><circle cx="141.2" cy="590.3" r="1.67" fill="url(#st)" fill-opacity="0.6"/><circle cx="152.2" cy="591.2" r="1.67" fill="url(#st)" fill-opacity="0.6"/><circle cx="51.4" cy="601.1" r="1.85" fill="url(#st)" fill-opacity="0.6"/><circle cx="129.5" cy="604" r="1.67" fill="url(#st)" fill-opacity="0.6"/><circle cx="150.7" cy="545.5" r="1.67" fill="url(#st)" fill-opacity="0.6"/><circle cx="327.2" cy="558.3" r="1.85" fill="url(#st)" fill-opacity="0.6"/><circle cx="300.3" cy="564.7" r="1.67" fill="url(#st)" fill-opacity="0.6"/><circle cx="401.1" cy="561.4" r="1.67" fill="url(#st)" fill-opacity="0.6"/><circle cx="468.6" cy="531.2" r="1.67" fill="url(#st)" fill-opacity="0.6"/><circle cx="477.9" cy="529.4" r="1.67" fill="url(#st)" fill-opacity="0.6"/><circle cx="484.5" cy="541.5" r="1.67" fill="url(#st)" fill-opacity="0.6"/><circle cx="538.5" cy="571.5" r="1.85" fill="url(#st)" fill-opacity="0.6"/><circle cx="496.6" cy="570.2" r="1.67" fill="url(#st)" fill-opacity="0.6"/><circle cx="408.4" cy="588.5" r="1.85" fill="url(#st)" fill-opacity="0.6"/><circle cx="358.7" cy="596.7" r="1.85" fill="url(#st)" fill-opacity="0.6"/><circle cx="355.9" cy="585.2" r="1.67" fill="url(#st)" fill-opacity="0.6"/><circle cx="338.9" cy="600" r="1.67" fill="url(#st)" fill-opacity="0.6"/><circle cx="530.8" cy="601.1" r="1.67" fill="url(#st)" fill-opacity="0.6"/><circle cx="325" cy="575.3" r="1.67" fill="url(#st)" fill-opacity="0.6"/><circle cx="343.7" cy="506.2" r="1.85" fill="url(#st)" fill-opacity="0.6"/><circle cx="507.6" cy="489.3" r="1.67" fill="url(#st)" fill-opacity="0.6"/></svg>
<div class="r" style="left:0px;top:624px;width:1119px;height:16px;background:linear-gradient(#b5c9e1,#a0b8d8);"></div>
<div class="r" style="left:0px;top:623px;width:1119px;height:1px;background:#8fa8c4;"></div>
<div class="t" style="left:5px;top:628px;font-size:11px;color:#152b4a;transform:scaleX(0.945) translateZ(0);">Live Stack</div>
<svg style="left:1089px;top:628px" width="9" height="11"><path d="M2 1H7M2.5 1V6.5H6.5V1M1 6.5H8M4.5 6.5V10.5" stroke="#000" stroke-width="1.3" fill="none"/></svg>
<svg style="left:1103px;top:628px" width="10" height="10"><path d="M0.5 0.5L9.5 9.5M9.5 0.5L0.5 9.5" stroke="#000" stroke-width="1.3"/></svg>
<div class="r" style="left:0px;top:640px;width:1119px;height:146px;background:#f0f0f0;"></div>
<div class="r" style="left:2px;top:649px;width:150px;height:55px;border:1px solid #dcdcdc;border-radius:3px;box-shadow:inset 1px 1px 0 #fafafa,1px 1px 0 #fafafa"></div>
<div class="r" style="left:6px;top:642px;width:46px;height:10px;background:#f0f0f0;"></div>
<div class="t" style="left:8px;top:643px;font-size:11px;color:#000;transform:scaleX(0.938) translateZ(0);">Overview</div>
<div class="t" style="left:7px;top:656px;font-size:11px;color:#000;transform:scaleX(0.914) translateZ(0);">Frames Stacked:</div>
<div class="t" style="left:89px;top:656px;font-size:11px;color:#000;transform:scaleX(0.898) translateZ(0);">67</div>
<div class="t" style="left:7px;top:671px;font-size:11px;color:#000;transform:scaleX(0.929) translateZ(0);">Frames Ignored:</div>
<div class="t" style="left:89px;top:671px;font-size:11px;color:#000;transform:scaleX(1.000) translateZ(0);">0</div>
<div class="t" style="left:7px;top:686px;font-size:11px;color:#000;transform:scaleX(0.949) translateZ(0);">Total Exposure:</div>
<div class="t" style="left:89px;top:686px;font-size:11px;color:#000;transform:scaleX(0.924) translateZ(0);">22m 20s</div>
<div class="r" style="left:2px;top:714px;width:150px;height:61px;border:1px solid #dcdcdc;border-radius:3px;box-shadow:inset 1px 1px 0 #fafafa,1px 1px 0 #fafafa"></div>
<div class="r" style="left:6px;top:707px;width:38px;height:10px;background:#f0f0f0;"></div>
<div class="t" style="left:8px;top:707px;font-size:11px;color:#000;transform:scaleX(0.914) translateZ(0);">Actions</div>
<div class="r" style="left:8px;top:720px;width:65px;height:22px;border:1px solid #a0a0a0;background:linear-gradient(#e6e6e6,#d9d9d9)"></div>
<div class="t" style="left:29px;top:726px;font-size:11px;color:#000;transform:scaleX(0.913) translateZ(0);">Clear</div>
<div class="r" style="left:79px;top:720px;width:66px;height:22px;border:1px solid #a0a0a0;background:linear-gradient(#e6e6e6,#d9d9d9)"></div>
<div class="r" style="left:127px;top:721px;width:1px;height:20px;background:#a0a0a0;"></div>
<div class="t" style="left:92px;top:726px;font-size:11px;color:#000;transform:scaleX(0.917) translateZ(0);">Save</div>
<svg style="left:131px;top:729px" width="9" height="6"><path d="M1 1L4.5 4.5L8 1" stroke="#000" stroke-width="2" fill="none"/></svg>
<div class="r" style="left:8px;top:747px;width:65px;height:22px;border:1px solid #a0a0a0;background:linear-gradient(#e6e6e6,#d9d9d9)"></div>
<div class="t" style="left:27px;top:754px;font-size:11px;color:#000;transform:scaleX(0.897) translateZ(0);">Pause</div>
<div class="r" style="left:159px;top:649px;width:166px;height:140px;border:1px solid #dcdcdc;border-radius:3px;box-shadow:inset 1px 1px 0 #fafafa,1px 1px 0 #fafafa"></div>
<div class="r" style="left:160px;top:642px;width:42px;height:10px;background:#f0f0f0;"></div>
<div class="t" style="left:162px;top:643px;font-size:11px;color:#000;transform:scaleX(0.928) translateZ(0);">Controls</div>
<div class="r" style="left:161px;top:655px;width:13px;height:13px;border:1px solid #777;border-radius:1px;background:#fff"></div>
<svg style="left:163px;top:657px" width="9" height="9"><path d="M1 4.8L3.6 7.6L8 1.2" stroke="#000" stroke-width="1.9" fill="none"/></svg>
<div class="t" style="left:179px;top:656px;font-size:11px;color:#000;transform:scaleX(0.926) translateZ(0);">Align Frames</div>
<div class="r" style="left:161px;top:674px;width:13px;height:13px;border:1px solid #777;border-radius:1px;background:#fff"></div>
<div class="t" style="left:179px;top:675px;font-size:11px;color:#000;transform:scaleX(0.940) translateZ(0);">FWHM Filter</div>
<div class="r" style="left:161px;top:692px;width:13px;height:13px;border:1px solid #777;border-radius:1px;background:#fff"></div>
<div class="t" style="left:179px;top:693px;font-size:11px;color:#000;transform:scaleX(0.931) translateZ(0);">Brightness Filter</div>
<div class="r" style="left:161px;top:709px;width:13px;height:13px;border:1px solid #777;border-radius:1px;background:#fff"></div>
<svg style="left:163px;top:711px" width="9" height="9"><path d="M1 4.8L3.6 7.6L8 1.2" stroke="#000" stroke-width="1.9" fill="none"/></svg>
<div class="t" style="left:179px;top:710px;font-size:11px;color:#000;transform:scaleX(0.932) translateZ(0);">Auto Save on Clear/Close</div>
<div class="t" style="left:161px;top:730px;font-size:11px;color:#000;transform:scaleX(0.914) translateZ(0);">Raw Frames</div>
<div class="r" style="left:223px;top:727px;width:97px;height:17px;border:1px solid #adadad;background:linear-gradient(#f2f2f2,#e6e6e6)"></div>
<svg style="left:306px;top:733px" width="8" height="5"><path d="M1 1L4 4L7 1" stroke="#5a5a5a" stroke-width="1.1" fill="none"/></svg>
<div class="t" style="left:230px;top:730px;font-size:11px;color:#000;transform:scaleX(0.930) translateZ(0);">Save All</div>
<div class="t" style="left:161px;top:751px;font-size:11px;color:#000;transform:scaleX(0.931) translateZ(0);">View</div>
<div class="r" style="left:188px;top:748px;width:132px;height:17px;border:1px solid #adadad;background:linear-gradient(#f2f2f2,#e6e6e6)"></div>
<svg style="left:306px;top:754px" width="8" height="5"><path d="M1 1L4 4L7 1" stroke="#5a5a5a" stroke-width="1.1" fill="none"/></svg>
<div class="t" style="left:194px;top:751px;font-size:11px;color:#000;transform:scaleX(0.944) translateZ(0);">Stack</div>
<div class="t" style="left:161px;top:772px;font-size:11px;color:#000;transform:scaleX(0.924) translateZ(0);">Stacking</div>
<div class="r" style="left:204px;top:769px;width:116px;height:17px;border:1px solid #adadad;background:linear-gradient(#f2f2f2,#e6e6e6)"></div>
<svg style="left:306px;top:775px" width="8" height="5"><path d="M1 1L4 4L7 1" stroke="#5a5a5a" stroke-width="1.1" fill="none"/></svg>
<div class="t" style="left:211px;top:772px;font-size:11px;color:#000;transform:scaleX(0.932) translateZ(0);">Sigma Clipping</div>
<div class="r" style="left:326px;top:640px;width:793px;height:146px;background:#f7f7f7;"></div>
<div class="r" style="left:330px;top:643px;width:39px;height:16px;border:1px solid #c2c2c2;background:linear-gradient(#f3f3f3,#e6e6e6)"></div>
<div class="t" style="left:336px;top:645px;font-size:11px;color:#000;transform:scaleX(0.910) translateZ(0);">Status</div>
<div class="r" style="left:429px;top:643px;width:57px;height:16px;border:1px solid #c2c2c2;background:linear-gradient(#f3f3f3,#e6e6e6)"></div>
<div class="t" style="left:434px;top:645px;font-size:11px;color:#000;transform:scaleX(0.944) translateZ(0);">Alignment</div>
<div class="r" style="left:485px;top:643px;width:52px;height:16px;border:1px solid #c2c2c2;background:linear-gradient(#f3f3f3,#e6e6e6)"></div>
<div class="t" style="left:491px;top:645px;font-size:11px;color:#000;transform:scaleX(0.919) translateZ(0);">Stacking</div>
<div class="r" style="left:536px;top:643px;width:76px;height:16px;border:1px solid #c2c2c2;background:linear-gradient(#f3f3f3,#e6e6e6)"></div>
<div class="t" style="left:543px;top:645px;font-size:11px;color:#000;transform:scaleX(0.927) translateZ(0);">Enhancement</div>
<div class="r" style="left:611px;top:643px;width:48px;height:16px;border:1px solid #c2c2c2;background:linear-gradient(#f3f3f3,#e6e6e6)"></div>
<div class="t" style="left:617px;top:645px;font-size:11px;color:#000;transform:scaleX(0.933) translateZ(0);">Guiding</div>
<div class="r" style="left:658px;top:643px;width:77px;height:16px;border:1px solid #c2c2c2;background:linear-gradient(#f3f3f3,#e6e6e6)"></div>
<div class="t" style="left:664px;top:645px;font-size:11px;color:#000;transform:scaleX(0.929) translateZ(0);">Filter (FWHM)</div>
<div class="r" style="left:734px;top:643px;width:94px;height:16px;border:1px solid #c2c2c2;background:linear-gradient(#f3f3f3,#e6e6e6)"></div>
<div class="t" style="left:740px;top:645px;font-size:11px;color:#000;transform:scaleX(0.933) translateZ(0);">Filter (Brightness)</div>
<div class="r" style="left:827px;top:643px;width:63px;height:16px;border:1px solid #c2c2c2;background:linear-gradient(#f3f3f3,#e6e6e6)"></div>
<div class="t" style="left:833px;top:645px;font-size:11px;color:#000;transform:scaleX(0.920) translateZ(0);">Drift Graph</div>
<div class="r" style="left:889px;top:643px;width:29px;height:16px;border:1px solid #c2c2c2;background:linear-gradient(#f3f3f3,#e6e6e6)"></div>
<div class="t" style="left:894px;top:645px;font-size:11px;color:#000;transform:scaleX(0.931) translateZ(0);">Log</div>
<div class="r" style="left:329px;top:658px;width:789px;height:128px;background:#ffffff;"></div>
<div class="r" style="left:368px;top:641px;width:62px;height:18px;background:#ffffff;"></div>
<div class="r" style="left:368px;top:641px;width:62px;height:19px;border:1px solid #c2c2c2;border-bottom:none;background:#fff"></div>
<div class="t" style="left:376px;top:644px;font-size:11px;color:#000;transform:scaleX(0.918) translateZ(0);">Histogram</div>
<svg style="left:330px;top:660px" width="787" height="124" viewBox="330 660 787 124"><rect x="330" y="660" width="787" height="124" fill="#000"/><path d="M640.9 784.0C645.7 778.5 659.9 760.9 669.7 751.2C679.6 741.5 685.5 734.2 700.0 726.0C714.5 717.8 737.8 709.2 756.7 702.2C775.6 695.2 794.4 688.8 813.3 683.7C832.2 678.6 851.1 674.7 870.0 671.6C888.9 668.5 907.7 666.8 926.6 665.3C945.5 663.8 963.2 663.2 983.3 662.5C1003.4 661.8 1036.4 661.2 1047.0 661.0" stroke="#d8d860" stroke-width="1.2" fill="none"/><path d="M604.9 660V784M669.8 660V784" stroke="#f0f040" stroke-width="2" stroke-dasharray="6 4"/><path d="M491 784L516.8 769L532 770L545.6 760.7L569.7 758.3L579.3 763.5L587.2 765.3L596.8 759.2L597.6 757.6L604 696.7L609.6 671L612 667C612.6 668.5 614.2 669.2 615.5 676.0C616.8 682.8 618.4 698.6 620.0 707.9C621.6 717.2 622.7 724.7 625.0 731.9C627.3 739.1 630.2 744.8 634.0 751.2C637.8 757.6 643.8 765.0 648.0 770.4C652.2 775.8 657.2 781.3 659.0 783.5" stroke="#c04018" stroke-width="1.5" fill="none" transform="translate(0,1)"/><path d="M491 784L516.8 769L532 770L545.6 760.7L569.7 758.3L579.3 763.5L587.2 765.3L596.8 759.2L597.6 757.6L604 696.7L609.6 671L612 667C612.6 668.5 614.2 669.2 615.5 676.0C616.8 682.8 618.4 698.6 620.0 707.9C621.6 717.2 622.7 724.7 625.0 731.9C627.3 739.1 630.2 744.8 634.0 751.2C637.8 757.6 643.8 765.0 648.0 770.4C652.2 775.8 657.2 781.3 659.0 783.5" stroke="#208020" stroke-width="1.1" fill="none" transform="translate(1.5,0)"/><path d="M491 784L516.8 769L532 770L545.6 760.7L569.7 758.3L579.3 763.5L587.2 765.3L589.6 757.6L603.2 682.2L612 664.6C612.7 666.2 614.4 666.8 616.0 674.0C617.6 681.2 620.0 698.2 621.7 707.9C623.5 717.5 624.3 724.7 626.5 731.9C628.7 739.1 631.2 744.8 635.0 751.2C638.8 757.6 644.8 765.0 649.0 770.4C653.2 775.8 658.2 781.3 660.0 783.5" stroke="#2030d0" stroke-width="2" fill="none"/><path d="M491 784L516.8 769L532 770L545.6 760.7L569.7 758.3L579.3 763.5L587.2 765.3L596.8 759.2L604 672.6L607.2 668.6L612 665.4C612.4 666.6 613.4 665.5 614.5 672.6C615.6 679.7 617.0 698.0 618.5 707.9C620.0 717.8 620.9 724.7 623.3 731.9C625.7 739.1 628.9 744.8 632.9 751.2C636.9 757.6 643.0 765.0 647.3 770.4C651.6 775.8 656.6 781.3 658.5 783.5" stroke="#f0f0ff" stroke-width="1.1" fill="none"/><path d="M1047 660V784" stroke="#f0f040" stroke-width="1.5" stroke-dasharray="4 3"/><rect x="853" y="665" width="12" height="12" fill="#6a6a6a"/><path d="M855.5 671L858.5 674.5L863 667" stroke="#111" stroke-width="1.8" fill="none"/><rect x="999" y="662" width="23" height="22" fill="#6e6e6e"/><path d="M1013 665.5L1004 674.5H1010L1008 681L1017 672H1011Z" stroke="#111" stroke-width="1.2" fill="none" stroke-linejoin="round"/><rect x="1024.5" y="662" width="22" height="22" fill="#6e6e6e"/><path d="M1032 669A5 5 0 1 1 1031 675" stroke="#111" stroke-width="1.3" fill="none"/><rect x="1049" y="660" width="17" height="124" fill="#ee1010"/><rect x="1066" y="660" width="16.5" height="124" fill="#088008"/><rect x="1082.5" y="660" width="17" height="124" fill="#0808f0"/><rect x="1099.5" y="660" width="5.5" height="124" fill="#d02828"/><rect x="1099.5" y="747" width="5.5" height="37" fill="#8a5a5a"/><rect x="1105" y="660" width="5.5" height="124" fill="#188818"/><rect x="1105" y="747" width="5.5" height="37" fill="#607060"/><rect x="1110.5" y="660" width="5.5" height="124" fill="#1818d8"/><rect x="1110.5" y="747" width="5.5" height="37" fill="#5a66a8"/><rect x="1055.3" y="665" width="4" height="119" fill="#f8d8d8"/><rect x="1072.1" y="665" width="4" height="119" fill="#d8f0d8"/><rect x="1089" y="665" width="4" height="119" fill="#e0e0f8"/><rect x="1106" y="665" width="3.7" height="119" fill="#e0f0e0"/><rect x="1049" y="730" width="17" height="10" fill="#ececec"/><rect x="1066" y="739" width="16.5" height="10" fill="#ececec"/><rect x="1082.5" y="689" width="17" height="10" fill="#ececec"/><rect x="1099.5" y="737" width="16.5" height="10" fill="#ececec"/></svg>
<div class="t" style="left:684px;top:724px;font-size:11px;color:#fff;font-weight:bold;transform:rotate(90deg) scaleX(0.92);transform-origin:0 0">Mid Level</div>
<div class="t" style="left:1044px;top:661px;font-size:11px;color:#fff;font-weight:bold;transform:rotate(90deg) scaleX(0.92);transform-origin:0 0">White Level</div>
<div class="t" style="left:870px;top:665px;font-size:11px;color:#7a7a7a;transform:scaleX(0.942) translateZ(0);">Logarithmic Horizontal Axis</div>
<div class="r" style="left:0px;top:786px;width:1500px;height:19px;background:#f0f0f0;"></div>
<div class="r" style="left:0px;top:786px;width:1500px;height:1px;background:#d8d8d8;"></div>
<div class="r" style="left:1px;top:787px;width:399px;height:17px;border:1px solid #c8c8c8;border-right-color:#fff;border-bottom-color:#fff"></div>
<div class="r" style="left:402px;top:787px;width:187px;height:17px;border:1px solid #c8c8c8;border-right-color:#fff;border-bottom-color:#fff"></div>
<div class="r" style="left:591px;top:787px;width:210px;height:17px;border:1px solid #c8c8c8;border-right-color:#fff;border-bottom-color:#fff"></div>
<div class="r" style="left:803px;top:787px;width:185px;height:17px;border:1px solid #c8c8c8;border-right-color:#fff;border-bottom-color:#fff"></div>
<div class="t" style="left:4px;top:790px;font-size:11px;color:#000;transform:scaleX(0.971) translateZ(0);">Previewing : 743 frames (4 dropped) in 3:02:19, exposure 20,0s , last frame 21,5s</div>
<div class="t" style="left:407px;top:790px;font-size:11px;color:#000;transform:scaleX(0.995) translateZ(0);">Memory: 6 of 101 frames in use.</div>
<div class="t" style="left:594px;top:790px;font-size:11px;color:#000;transform:scaleX(0.970) translateZ(0);">Cooler: 27%, Temp: -10,0C, Target: -10,0C</div>
<div class="t" style="left:806px;top:790px;font-size:11px;color:#000;transform:scaleX(0.967) translateZ(0);">67 Stacked, 0 Ignored, 22m 20s</div>
<div class="t" style="left:1293px;top:790px;font-size:11px;color:#000;transform:scaleX(0.947) translateZ(0);">Frame:</div>
<div class="r" style="left:1331px;top:788px;width:93px;height:14px;border:1px solid #bcbcbc;background:#e6e6e6"></div>
<div class="r" style="left:1332px;top:789px;width:45px;height:12px;background:linear-gradient(90deg,#06b025,#3ccd50 55%,#8ae08e);"></div>
<div class="t" style="left:1429px;top:790px;font-size:11px;color:#000;transform:scaleX(0.976) translateZ(0);">00:11/00:09</div>
<div class="r" style="left:0px;top:806px;width:1500px;height:37px;background:linear-gradient(90deg,#202120 0,#232221 40%,#2e2121 70%,#3b2320 100%);"></div>
<div class="r" style="left:0px;top:804px;width:1500px;height:2px;background:#f0f0f0;"></div>
<svg style="left:14px;top:816px" width="16" height="16"><path d="M0 2.2L6.6 1.3V7.4H0ZM7.4 1.2L16 0V7.4H7.4ZM0 8.2H6.6V14.5L0 13.6ZM7.4 8.2H16V16L7.4 14.8Z" fill="#fff"/></svg>
<div class="r" style="left:44px;top:806px;width:323px;height:37px;background:#f0f0f0;"></div>
<svg style="left:55px;top:817px" width="16" height="16"><circle cx="10" cy="6" r="5" stroke="#222" stroke-width="1.3" fill="none"/><path d="M6.4 9.6L1 15" stroke="#222" stroke-width="1.5"/></svg>
<div class="t" style="left:82px;top:818px;font-size:13px;color:#4a4a4a;transform:scaleX(1.057) translateZ(0);">Taper ici pour rechercher</div>
<svg style="left:381px;top:817px" width="16" height="16"><circle cx="8" cy="8" r="6.3" stroke="#fff" stroke-width="2" fill="none"/></svg>
<svg style="left:425px;top:814px" width="22" height="21"><path d="M11 1C5 1 1 5.5 1 11C1 16.5 5.5 20 11 20C15 20 18 18.5 20 16V12.5C18 15 15 16.5 12 16.5C8.5 16.5 6.5 14.5 6.5 12H21V10.5C21 4.5 16.5 1 11 1ZM6.7 9C7.2 6.5 9 5 11.3 5C13.6 5 15.3 6.5 15.5 9Z" fill="#1e88e5"/></svg>
<svg style="left:468px;top:815px" width="21" height="19"><path d="M0 2H7L9 4H21V18H0Z" fill="#e8b830"/><path d="M0 6H21V18H0Z" fill="#f6d465"/><rect x="6" y="11" width="9" height="7" fill="#3a8ad8"/><rect x="8" y="13" width="5" height="5" fill="#7ab8f0"/></svg>
<svg style="left:510px;top:812px" width="22" height="24"><rect x="1.5" y="4" width="19" height="19" rx="2" fill="#f6f6f6"/><path d="M2 2Q9 3 13 10Q16 15 19 21L17.5 22Q13 17 9 13Q3 9 2 2Z" fill="#2a70d8"/><path d="M9 13Q13 17 17.5 22L19 21Q16 15 13.5 11.5Q12 14 9 13Z" fill="#30a860"/></svg>
<svg style="left:552px;top:813px" width="24" height="24"><circle cx="12" cy="12" r="10.5" fill="#0e2030" stroke="#2a98e0" stroke-width="2.2"/><path d="M15.5 8.3A5 5 0 1 0 15.5 15.7" stroke="#2a98e0" stroke-width="2.6" fill="none"/></svg>
<svg style="left:596px;top:813px" width="24" height="23"><ellipse cx="11.5" cy="10" rx="10.5" ry="6" fill="#c89098" transform="rotate(-25 11.5 10)"/><ellipse cx="11.5" cy="8.6" rx="10" ry="5.2" fill="#f4eef0" transform="rotate(-25 11.5 8.6)"/><path d="M10 5L15 15M15 5L12 15" stroke="#3a80c8" stroke-width="1.4"/><circle cx="12.5" cy="18.5" r="2.3" stroke="#3a80c8" stroke-width="1.5" fill="none"/><circle cx="17" cy="17" r="2.3" stroke="#3a80c8" stroke-width="1.5" fill="none"/></svg>
<svg style="left:637px;top:813px" width="24" height="24"><circle cx="12" cy="12" r="11" fill="#1a0606"/><path d="M2.5 15A10 10 0 0 0 21.5 15" stroke="#e01818" stroke-width="2.4" fill="none"/><circle cx="12" cy="12" r="8.5" fill="#3a0808"/><path d="M8 16L17 6" stroke="#f02020" stroke-width="2.6" stroke-linecap="round"/></svg>
<svg style="left:680px;top:813px" width="23" height="23"><rect x="0" y="0" width="23" height="23" fill="#4e4e4e"/><path d="M11.5 2L14.2 8.6H21.5L15.6 13L17.8 20.5L11.5 16L5.2 20.5L7.4 13L1.5 8.6H8.8Z" fill="#f2f2f2"/><path d="M11.5 2L14.2 8.6L11.5 12ZM1.5 8.6L8.8 8.6L11.5 12L7.4 13ZM11.5 16L17.8 20.5L15.6 13Z" fill="#9a9a9a"/></svg>
<div class="r" style="left:713px;top:806px;width:115px;height:35px;background:#484846;"></div>
<div class="r" style="left:721px;top:814px;width:21px;height:21px;border-radius:50%;background:radial-gradient(circle at 50% 40%,#c8c0c0,#7a7070 70%,#504848)"></div>
<div class="r" style="left:721px;top:827px;width:10px;height:6px;background:#5aa898;"></div>
<div class="t" style="left:747px;top:818px;font-size:12px;color:#f4f4f4;transform:scaleX(0.890) translateZ(0);">SharpCap Pr...</div>
<div class="r" style="left:713px;top:841px;width:115px;height:2px;background:#f0b4ac;"></div>
<div class="r" style="left:833px;top:841px;width:108px;height:2px;background:#f0b4ac;"></div>
<div class="r" style="left:948px;top:841px;width:108px;height:2px;background:#f0b4ac;"></div>
<div class="r" style="left:1063px;top:841px;width:109px;height:2px;background:#f0b4ac;"></div>
<div class="r" style="left:1180px;top:841px;width:108px;height:2px;background:#f0b4ac;"></div>
<svg style="left:836px;top:814px" width="24" height="22"><circle cx="12" cy="11" r="10.5" fill="#f28a1a"/><path d="M3 13Q6 5 14 4Q8 8 8 14Q8 19 14 20Q5 20 3 13Z" fill="#2a2020"/><path d="M9 12Q11 7 17 6.5" stroke="#2a2020" stroke-width="2.2" fill="none"/></svg>
<div class="t" style="left:863px;top:818px;font-size:12px;color:#f4f4f4;transform:scaleX(0.848) translateZ(0);">CPWI 2.3.5</div>
<svg style="left:953px;top:814px" width="22" height="22"><rect x="0" y="0" width="22" height="22" fill="#1a2230"/><circle cx="11" cy="8" r="6" fill="#f08a20"/><path d="M6 9Q8 4 13 3.5Q9 6 9.5 10Z" fill="#1a2230"/><text x="11" y="20" font-family="Liberation Sans" font-size="6.5" fill="#8ab0e0" text-anchor="middle">CPWI</text></svg>
<div class="t" style="left:978px;top:818px;font-size:12px;color:#f4f4f4;transform:scaleX(0.919) translateZ(0);">Slew Controls</div>
<svg style="left:1068px;top:814px" width="22" height="22"><rect x="0" y="0" width="22" height="22" fill="#1a2230"/><circle cx="11" cy="8" r="6" fill="#f08a20"/><path d="M6 9Q8 4 13 3.5Q9 6 9.5 10Z" fill="#1a2230"/><text x="11" y="20" font-family="Liberation Sans" font-size="6.5" fill="#8ab0e0" text-anchor="middle">CPWI</text></svg>
<div class="t" style="left:1094px;top:818px;font-size:12px;color:#f4f4f4;transform:scaleX(0.903) translateZ(0);">Find Target</div>
<svg style="left:1186px;top:814px" width="19" height="20"><rect x="0" y="0" width="19" height="20" rx="3" fill="#7289da"/><path d="M4 6Q9.5 3 15 6L16 13Q13 15.5 12 14.5L11.5 13Q9.5 14 7.5 13L7 14.5Q6 15.5 3 13Z" fill="#fff"/><circle cx="7.3" cy="10" r="1.3" fill="#7289da"/><circle cx="11.7" cy="10" r="1.3" fill="#7289da"/></svg>
<div class="t" style="left:1210px;top:818px;font-size:12px;color:#f4f4f4;transform:scaleX(0.876) translateZ(0);">Blabla Live St...</div>
<svg style="left:1300px;top:820px" width="13" height="8"><path d="M1 7L6.5 1.5L12 7" stroke="#f0f0f0" stroke-width="1.3" fill="none"/></svg>
<svg style="left:1323px;top:816px" width="13" height="16"><path d="M3 2Q6.5 -0.5 10 2M3 14Q6.5 16.5 10 14" stroke="#e0e0e0" stroke-width="1" fill="none"/><rect x="1.5" y="4.5" width="7" height="7" rx="1" stroke="#f0f0f0" stroke-width="1.2" fill="none"/><path d="M9 7L12 5V11L9 9" stroke="#f0f0f0" stroke-width="1.1" fill="none"/></svg>
<svg style="left:1343px;top:817px" width="16" height="13"><path d="M1 2V5H4V2M2.5 5V8" stroke="#f0f0f0" stroke-width="1.2" fill="none"/><rect x="4.5" y="4.5" width="10" height="6" stroke="#f0f0f0" stroke-width="1.1" fill="none"/><rect x="6" y="6" width="7" height="3" fill="#f0f0f0"/></svg>
<svg style="left:1366px;top:816px" width="16" height="15"><path d="M1 5H4L8 1.5V13.5L4 10H1Z" stroke="#f0f0f0" stroke-width="1.1" fill="none"/><path d="M10 5Q11.5 7.5 10 10M12 3.5Q14.5 7.5 12 11.5M13.8 2Q17 7.5 13.8 13" stroke="#f0f0f0" stroke-width="1" fill="none"/></svg>
<div class="t" style="left:1404px;top:811px;font-size:12px;color:#f4f4f4;transform:scaleX(0.833) translateZ(0);">02:01</div>
<div class="t" style="left:1391px;top:827px;font-size:12px;color:#f4f4f4;transform:scaleX(0.883) translateZ(0);">05/04/2021</div>
<svg style="left:1461px;top:817px" width="17" height="16"><path d="M0.6 0.6H16.4V11.4H10.5L8.5 14.5L6.5 11.4H0.6Z" stroke="#f0f0f0" stroke-width="1.2" fill="none"/></svg>
<div class="r" style="left:1487px;top:806px;width:1px;height:37px;background:#6a5050;"></div>
<div class="r" style="left:789px;top:281px;width:222px;height:226px;border-radius:6px 6px 1px 1px;background:#eef2f6;box-shadow:0 0 0 1px #9aa4ad,0 0 5px 1px rgba(0,0,0,0.25)"></div>
<div class="r" style="left:790px;top:282px;width:220px;height:24px;border-radius:5px 5px 0 0;background:linear-gradient(90deg,#c6d4e2,#d8e3ee 60%,#d0dcea)"></div>
<div class="t" style="left:794px;top:290px;font-size:11px;color:#1a1a1a;transform:scaleX(0.987) translateZ(0);">Slew Controls</div>
<div class="r" style="left:989px;top:286px;width:19px;height:17px;border-top:1px solid #fff;border-left:1px solid #fff;border-right:2px solid #6e6e6e;border-bottom:2px solid #6e6e6e;background:#ececec"></div>
<svg style="left:993px;top:290px" width="10" height="10"><path d="M1 1L9 9M9 1L1 9" stroke="#000" stroke-width="2"/></svg>
<div class="r" style="left:792px;top:306px;width:217px;height:199px;background:#36404a;"></div>
<div class="r" style="left:820px;top:327px;width:51px;height:36px;background:#93a5b2;"></div>
<svg style="left:842.0px;top:341.5px" width="7" height="7"><circle cx="3.5" cy="3.5" r="2.9" fill="#fff"/></svg>
<div class="r" style="left:875px;top:327px;width:51px;height:36px;background:#5d7082;"></div>
<svg style="left:895.5px;top:341.0px" width="10" height="8"><path d="M5 0L10 7.5H0Z" fill="#fff"/></svg>
<div class="r" style="left:930px;top:327px;width:51px;height:36px;background:#93a5b2;"></div>
<svg style="left:952.0px;top:341.5px" width="7" height="7"><circle cx="3.5" cy="3.5" r="2.9" fill="#fff"/></svg>
<div class="r" style="left:820px;top:367px;width:51px;height:36px;background:#5d7082;"></div>
<svg style="left:841.5px;top:380.0px" width="8" height="10"><path d="M0 5L7.5 0V10Z" fill="#fff"/></svg>
<div class="t" style="left:891px;top:372px;font-size:28px;color:#ffffff;transform:scaleX(1.027) translateZ(0);">6</div>
<div class="r" style="left:930px;top:367px;width:51px;height:36px;background:#5d7082;"></div>
<svg style="left:951.5px;top:380.0px" width="8" height="10"><path d="M7.5 5L0 0V10Z" fill="#fff"/></svg>
<div class="r" style="left:820px;top:407px;width:51px;height:37px;background:#93a5b2;"></div>
<svg style="left:842.0px;top:422.0px" width="7" height="7"><circle cx="3.5" cy="3.5" r="2.9" fill="#fff"/></svg>
<div class="r" style="left:875px;top:407px;width:51px;height:37px;background:#5d7082;border:1px solid #c8d2da;"></div>
<svg style="left:895.5px;top:421.5px" width="10" height="8"><path d="M5 7.5L10 0H0Z" fill="#fff"/></svg>
<div class="r" style="left:930px;top:407px;width:51px;height:37px;background:#93a5b2;"></div>
<svg style="left:952.0px;top:422.0px" width="7" height="7"><circle cx="3.5" cy="3.5" r="2.9" fill="#fff"/></svg>
<div class="r" style="left:821px;top:462px;width:51px;height:25px;background:#5d7082;"></div>
<div class="r" style="left:930px;top:462px;width:51px;height:25px;background:#5d7082;"></div>
<svg style="left:842px;top:469px" width="8" height="10"><path d="M0 5L7.5 0V10Z" fill="#fff"/></svg>
<svg style="left:952px;top:469px" width="8" height="10"><path d="M7.5 5L0 0V10Z" fill="#fff"/></svg>
<div class="t" style="left:880px;top:470px;font-size:11px;color:#ffffff;font-weight:bold;transform:scaleX(1.030) translateZ(0);">RATE</div>
</body></html>
